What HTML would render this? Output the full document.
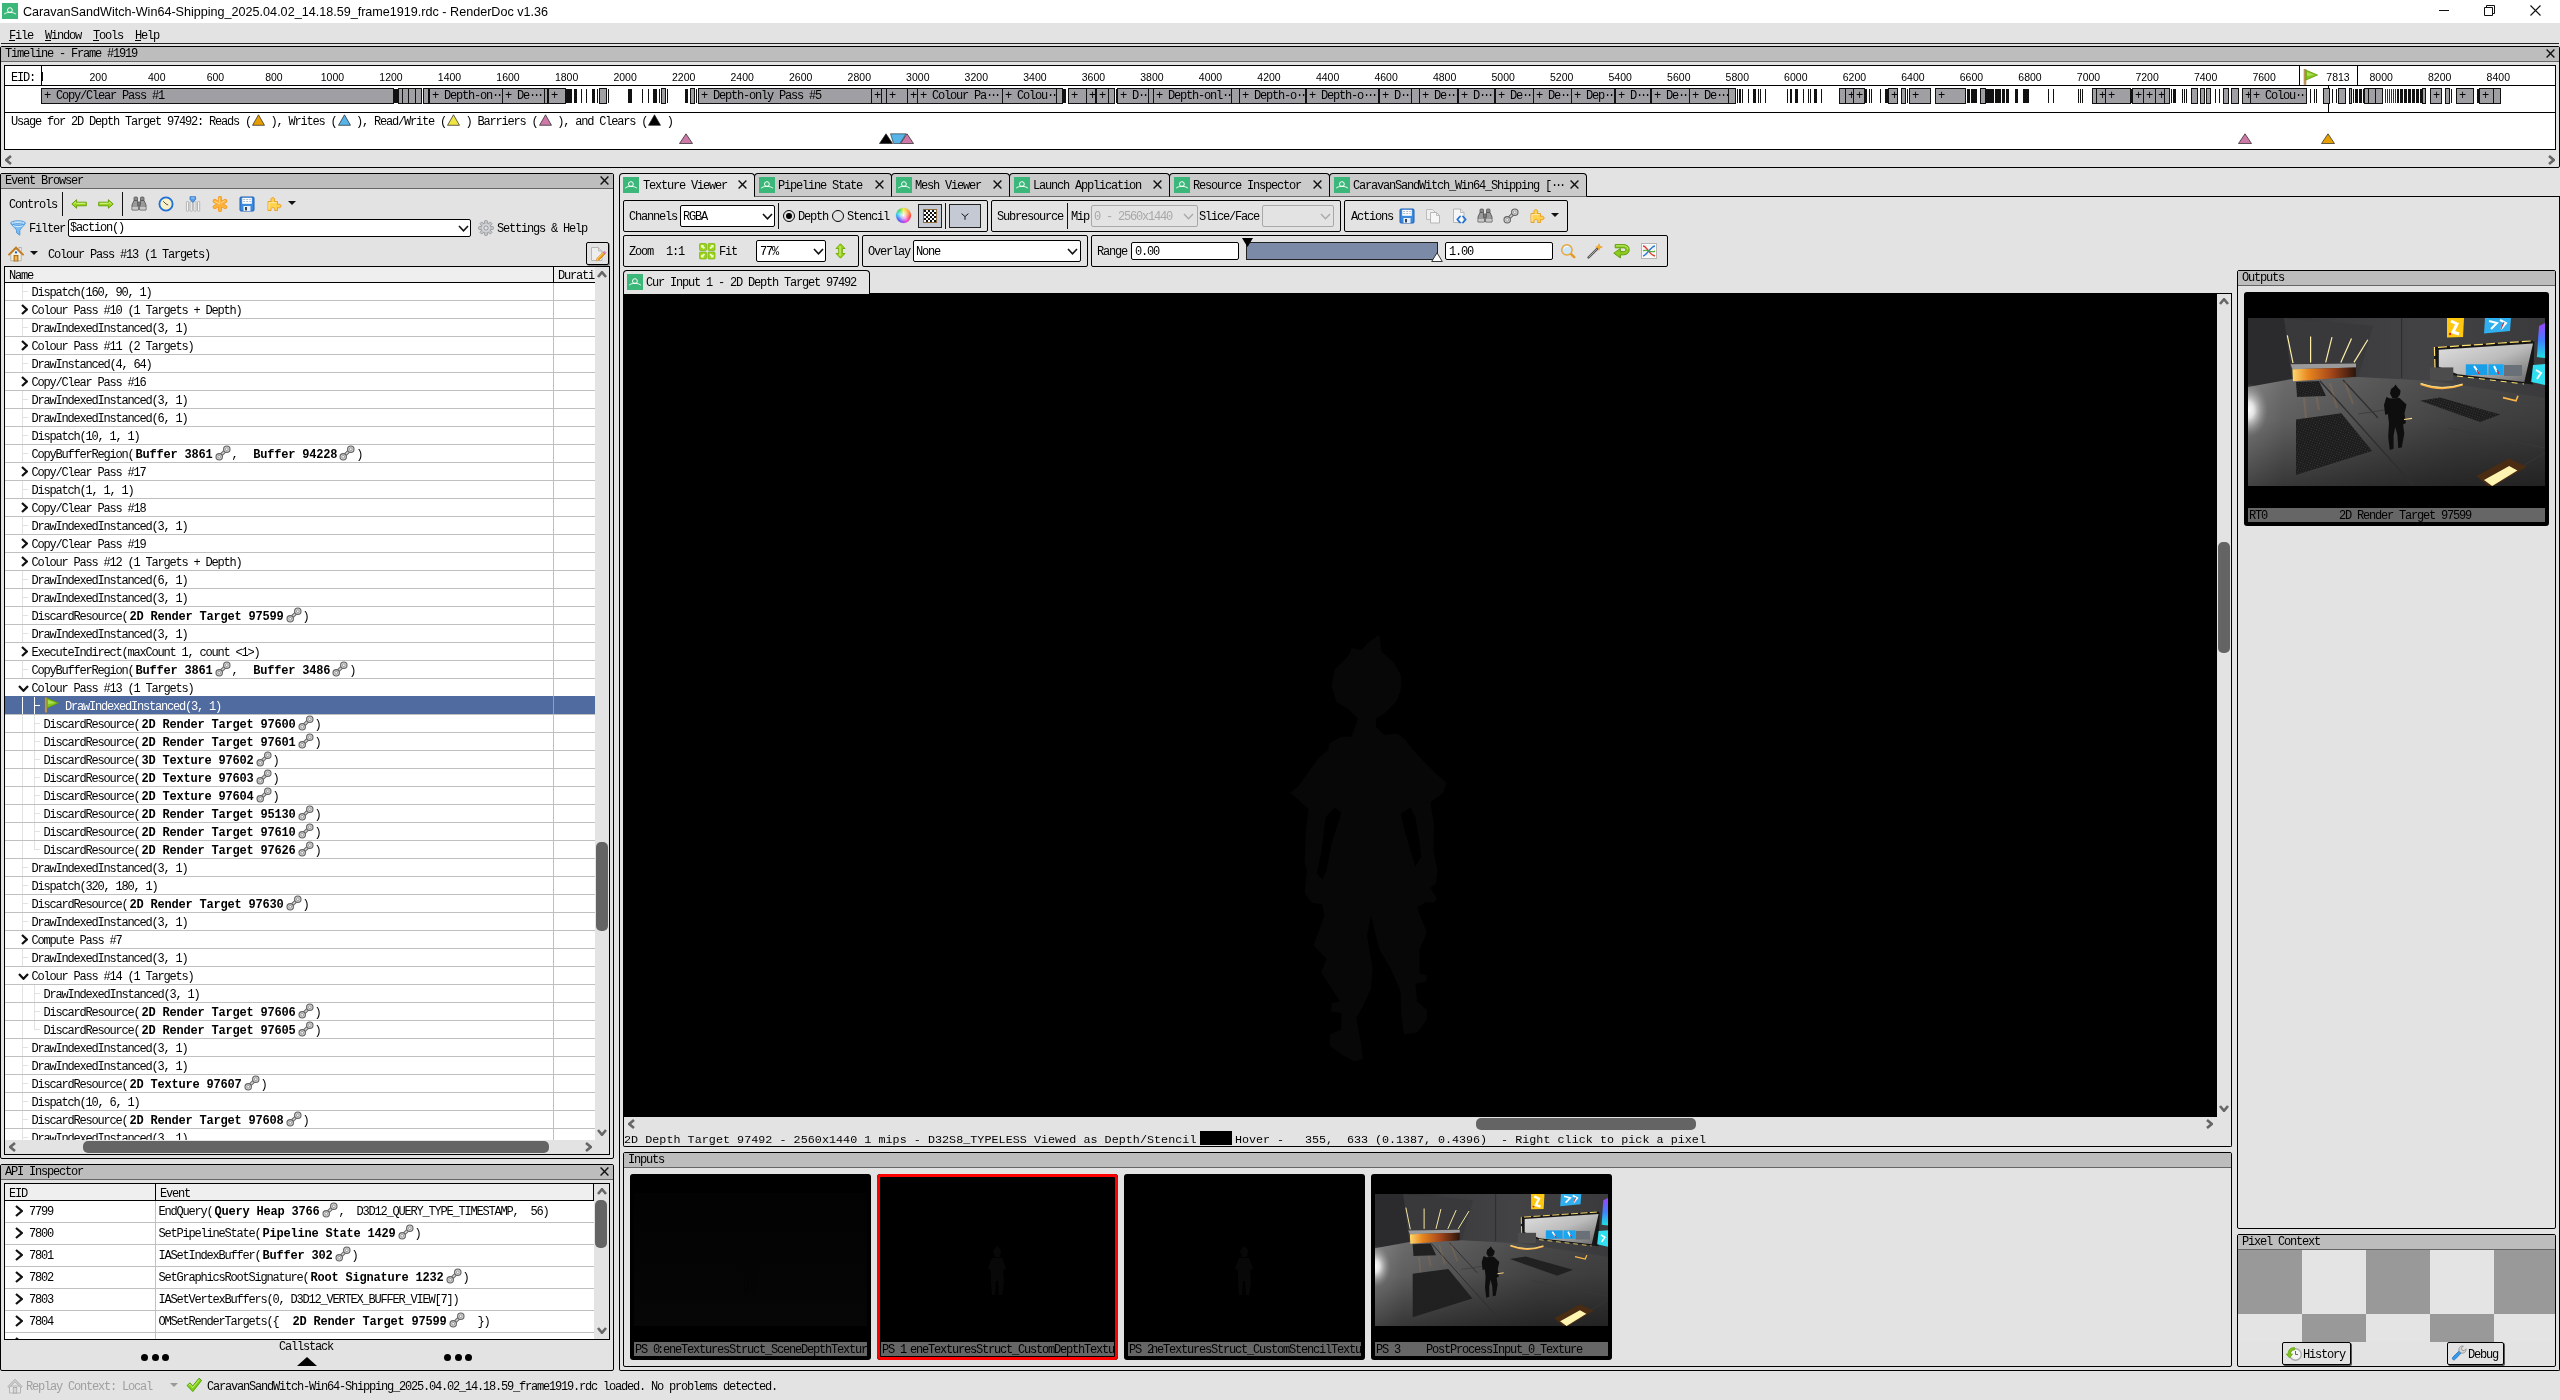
<!DOCTYPE html>
<html lang="en"><head><meta charset="utf-8"><title>RenderDoc</title><style>
html,body{margin:0;padding:0}
body{will-change:transform;width:2560px;height:1400px;overflow:hidden;background:#e3e3e3;position:relative;font-family:"Liberation Mono",monospace}
.b{position:absolute;box-sizing:border-box}
.t{position:absolute;font:12px/14px "Liberation Mono",monospace;letter-spacing:-1.2px;white-space:pre;color:#000}
.t b,.r b{letter-spacing:-0.2px}
.num{font:10.5px/14px "Liberation Sans",sans-serif;text-align:center;color:#000}
.pb{top:88px;height:16px;background:#a0a0a4;border:1px solid #111;overflow:hidden}
.pb .t{top:0}
u{text-decoration:underline}

.r{position:absolute;font:12px/14px "Liberation Mono",monospace;letter-spacing:-1.2px;white-space:pre;color:#000;display:flex;align-items:flex-start}
.r b{margin-left:2px}
.r i{display:block;width:16px;height:16px;margin:-3px 1px 0 2px;flex:none}
.sel{color:#fff}

.grp{position:absolute;box-sizing:border-box;border:1px solid #000;border-radius:2px;height:32px}
.cb{position:absolute;box-sizing:border-box;border:1px solid #000;border-radius:2px;background:#fff}
.cbd{position:absolute;box-sizing:border-box;border:1px solid #a8a8a8;border-radius:2px;background:#e3e3e3}
.m{position:absolute;font:11.72px/14px "Liberation Mono",monospace;white-space:pre;color:#000}
.tab{position:absolute;box-sizing:border-box;border:1px solid #000;border-bottom:none;border-radius:4px 4px 0 0;background:#cbcbcb}

.th{position:absolute;box-sizing:border-box;background:#000;border-radius:3px}
.lb{position:absolute;box-sizing:border-box;background:#666;height:14px;overflow:hidden}
.lb .t{top:1px}
</style></head><body>
<div class="b" style="left:0px;top:0px;width:2560px;height:23px;background:#fff"></div>
<div class="b" style="left:2px;top:3px"><svg width="16" height="16" viewBox="0 0 16 16" style="display:block;"><rect width="16" height="16" fill="#3bb779"/><circle cx="7.9" cy="7.1" r="2.4" fill="none" stroke="#fff" stroke-width="1"/><path d="M2.4 10.9 Q4 9.7 5.8 9.5 Q7.9 8.9 10 9.5 Q11.8 9.7 13.6 10.9" fill="none" stroke="#fff" stroke-width=".9" stroke-linecap="round"/></svg></div>
<div class="b" style="left:23px;top:5.4px;font:12.6px/14px 'Liberation Sans',sans-serif;color:#000;white-space:pre">CaravanSandWitch-Win64-Shipping_2025.04.02_14.18.59_frame1919.rdc - RenderDoc v1.36</div>
<div class="b" style="left:2439px;top:10px;width:10px;height:1px;background:#111"></div>
<div class="b" style="left:2484px;top:5px"><svg width="11" height="11" viewBox="0 0 11 11" style="display:block;"><path d="M0.5 2.5 H8.5 V10.5 H0.5 Z M2.5 2.5 V0.5 H10.5 V8.5 H8.5" fill="none" stroke="#111" stroke-width="1"/></svg></div>
<div class="b" style="left:2530px;top:5px"><svg width="11" height="11" viewBox="0 0 11 11" style="display:block;"><path d="M0.5 0.5 L10.5 10.5 M10.5 0.5 L0.5 10.5" stroke="#111" stroke-width="1.1" fill="none"/></svg></div>
<div class="t" style="left:9px;top:29px;"><u>F</u>ile</div>
<div class="t" style="left:45px;top:29px;"><u>W</u>indow</div>
<div class="t" style="left:93px;top:29px;"><u>T</u>ools</div>
<div class="t" style="left:135px;top:29px;"><u>H</u>elp</div>
<div class="b" style="left:1px;top:43px;width:2558px;height:1px;background:#222"></div>
<div class="b" style="left:0px;top:46px;width:2560px;height:122px;border:1px solid #000;border-radius:2px;box-sizing:border-box"></div>
<div class="b" style="left:1px;top:47px;width:2558px;height:15px;background:#bdbdbd;border-bottom:1px solid #666"></div>
<div class="t" style="left:5px;top:47px;">Timeline - Frame #1919</div>
<div class="b" style="left:2546px;top:49px"><svg width="9" height="9" viewBox="0 0 9 9" style="display:block;"><path d="M0.6 0.6 L8.4 8.4 M8.4 0.6 L0.6 8.4" stroke="#111" stroke-width="1.4" fill="none"/></svg></div>
<div class="b" style="left:4px;top:65px;width:2552px;height:85px;background:#fff;border:1px solid #000;box-sizing:border-box"></div>
<div class="b" style="left:5px;top:85px;width:2550px;height:1px;background:#000"></div>
<div class="b" style="left:5px;top:112px;width:2550px;height:1px;background:#000"></div>
<div class="b" style="left:41px;top:66px;width:1px;height:19px;background:#000"></div>
<div class="t" style="left:11px;top:71px;">EID:</div>
<div class="b num" style="left:78.3px;top:70px;width:40px">200</div>
<div class="b num" style="left:136.8px;top:70px;width:40px">400</div>
<div class="b num" style="left:195.4px;top:70px;width:40px">600</div>
<div class="b num" style="left:253.9px;top:70px;width:40px">800</div>
<div class="b num" style="left:312.4px;top:70px;width:40px">1000</div>
<div class="b num" style="left:371.0px;top:70px;width:40px">1200</div>
<div class="b num" style="left:429.5px;top:70px;width:40px">1400</div>
<div class="b num" style="left:488.0px;top:70px;width:40px">1600</div>
<div class="b num" style="left:546.6px;top:70px;width:40px">1800</div>
<div class="b num" style="left:605.1px;top:70px;width:40px">2000</div>
<div class="b num" style="left:663.7px;top:70px;width:40px">2200</div>
<div class="b num" style="left:722.2px;top:70px;width:40px">2400</div>
<div class="b num" style="left:780.7px;top:70px;width:40px">2600</div>
<div class="b num" style="left:839.3px;top:70px;width:40px">2800</div>
<div class="b num" style="left:897.8px;top:70px;width:40px">3000</div>
<div class="b num" style="left:956.3px;top:70px;width:40px">3200</div>
<div class="b num" style="left:1014.9px;top:70px;width:40px">3400</div>
<div class="b num" style="left:1073.4px;top:70px;width:40px">3600</div>
<div class="b num" style="left:1131.9px;top:70px;width:40px">3800</div>
<div class="b num" style="left:1190.5px;top:70px;width:40px">4000</div>
<div class="b num" style="left:1249.0px;top:70px;width:40px">4200</div>
<div class="b num" style="left:1307.6px;top:70px;width:40px">4400</div>
<div class="b num" style="left:1366.1px;top:70px;width:40px">4600</div>
<div class="b num" style="left:1424.6px;top:70px;width:40px">4800</div>
<div class="b num" style="left:1483.2px;top:70px;width:40px">5000</div>
<div class="b num" style="left:1541.7px;top:70px;width:40px">5200</div>
<div class="b num" style="left:1600.2px;top:70px;width:40px">5400</div>
<div class="b num" style="left:1658.8px;top:70px;width:40px">5600</div>
<div class="b num" style="left:1717.3px;top:70px;width:40px">5800</div>
<div class="b num" style="left:1775.8px;top:70px;width:40px">6000</div>
<div class="b num" style="left:1834.4px;top:70px;width:40px">6200</div>
<div class="b num" style="left:1892.9px;top:70px;width:40px">6400</div>
<div class="b num" style="left:1951.4px;top:70px;width:40px">6600</div>
<div class="b num" style="left:2010.0px;top:70px;width:40px">6800</div>
<div class="b num" style="left:2068.5px;top:70px;width:40px">7000</div>
<div class="b num" style="left:2127.1px;top:70px;width:40px">7200</div>
<div class="b num" style="left:2185.6px;top:70px;width:40px">7400</div>
<div class="b num" style="left:2244.1px;top:70px;width:40px">7600</div>
<div class="b num" style="left:2361.2px;top:70px;width:40px">8000</div>
<div class="b num" style="left:2419.7px;top:70px;width:40px">8200</div>
<div class="b num" style="left:2478.3px;top:70px;width:40px">8400</div>
<div class="b" style="left:42px;top:72px;width:1px;height:9px;background:#111"></div>
<div class="b" style="left:2299px;top:65px;width:59px;height:21px;border:1px solid #000;box-sizing:border-box;background:#fff"></div>
<div class="b" style="left:2303px;top:69px"><svg width="16" height="16" viewBox="0 0 16 16" style="display:block;"><rect x="1" y="0.5" width="2" height="15" fill="#c9a063" stroke="#9a7438" stroke-width=".5"/><path d="M3 1.2 L14.5 6 L3 11 Z" fill="#86c41e" stroke="#5f9a0a" stroke-width=".8" stroke-linejoin="round"/><path d="M4 3 L11.5 6 L4 7" fill="#b8e860" opacity=".75"/></svg></div>
<div class="b num" style="left:2318px;top:70px;width:40px">7813</div>
<div class="b" style="left:2328px;top:86px;width:1px;height:26px;background:#000"></div>
<div class="b pb" style="left:41px;width:353px"><span class="t" style="left:2px;">+ Copy/Clear Pass #1</span></div>
<div class="b" style="left:394px;top:89px;width:4px;height:14px;background:#111"></div>
<div class="b pb" style="left:398px;width:5px"></div>
<div class="b pb" style="left:402px;width:7px"></div>
<div class="b pb" style="left:408px;width:8px"></div>
<div class="b pb" style="left:415px;width:7px"></div>
<div class="b pb" style="left:423px;width:6px"></div>
<div class="b pb" style="left:429px;width:74px"><span class="t" style="left:2px;">+ Depth-on<span style="letter-spacing:-3.2px">···</span></span></div>
<div class="b pb" style="left:502px;width:43px"><span class="t" style="left:2px;">+ De<span style="letter-spacing:-3.2px">···</span></span></div>
<div class="b pb" style="left:544px;width:4px"></div>
<div class="b pb" style="left:548px;width:18px"><span class="t" style="left:2px;">+</span></div>
<div class="b" style="left:566px;top:89px;width:6px;height:14px;background:#111"></div>
<div class="b" style="left:574px;top:89px;width:3px;height:14px;background:#111"></div>
<div class="b" style="left:581px;top:89px;width:1px;height:14px;background:#111"></div>
<div class="b" style="left:586px;top:89px;width:1px;height:14px;background:#111"></div>
<div class="b" style="left:592px;top:89px;width:3px;height:14px;background:#111"></div>
<div class="b" style="left:597px;top:89px;width:1px;height:14px;background:#111"></div>
<div class="b pb" style="left:599px;width:8px"></div>
<div class="b" style="left:608px;top:89px;width:1px;height:14px;background:#111"></div>
<div class="b" style="left:628px;top:89px;width:4px;height:14px;background:#111"></div>
<div class="b" style="left:642px;top:89px;width:1px;height:14px;background:#111"></div>
<div class="b" style="left:648px;top:89px;width:1px;height:14px;background:#111"></div>
<div class="b" style="left:653px;top:89px;width:4px;height:14px;background:#111"></div>
<div class="b" style="left:659px;top:89px;width:1px;height:14px;background:#111"></div>
<div class="b pb" style="left:661px;width:5px"></div>
<div class="b" style="left:667px;top:89px;width:1px;height:14px;background:#111"></div>
<div class="b" style="left:685px;top:89px;width:3px;height:14px;background:#111"></div>
<div class="b pb" style="left:690px;width:5px"></div>
<div class="b" style="left:696px;top:89px;width:1px;height:14px;background:#111"></div>
<div class="b pb" style="left:698px;width:174px"><span class="t" style="left:2px;">+ Depth-only Pass #5</span></div>
<div class="b pb" style="left:871px;width:11px"><span class="t" style="left:2px;">+</span></div>
<div class="b pb" style="left:881px;width:6px"></div>
<div class="b pb" style="left:886px;width:22px"><span class="t" style="left:2px;">+</span></div>
<div class="b pb" style="left:907px;width:11px"><span class="t" style="left:2px;">+</span></div>
<div class="b pb" style="left:917px;width:86px"><span class="t" style="left:2px;">+ Colour Pa<span style="letter-spacing:-3.2px">···</span></span></div>
<div class="b pb" style="left:1002px;width:55px"><span class="t" style="left:2px;">+ Colou<span style="letter-spacing:-3.2px">···</span></span></div>
<div class="b pb" style="left:1056px;width:7px"></div>
<div class="b" style="left:1063px;top:89px;width:3px;height:14px;background:#111"></div>
<div class="b pb" style="left:1068px;width:19px"><span class="t" style="left:2px;">+</span></div>
<div class="b pb" style="left:1086px;width:10px"><span class="t" style="left:2px;">+</span></div>
<div class="b pb" style="left:1096px;width:13px"><span class="t" style="left:2px;">+</span></div>
<div class="b pb" style="left:1108px;width:7px"></div>
<div class="b" style="left:1116px;top:89px;width:1px;height:14px;background:#111"></div>
<div class="b pb" style="left:1117px;width:32px"><span class="t" style="left:2px;">+ D<span style="letter-spacing:-3.2px">···</span></span></div>
<div class="b pb" style="left:1148px;width:6px"></div>
<div class="b pb" style="left:1153px;width:79px"><span class="t" style="left:2px;">+ Depth-onl<span style="letter-spacing:-3.2px">···</span></span></div>
<div class="b pb" style="left:1231px;width:9px"></div>
<div class="b pb" style="left:1239px;width:67px"><span class="t" style="left:2px;">+ Depth-o<span style="letter-spacing:-3.2px">···</span></span></div>
<div class="b pb" style="left:1306px;width:73px"><span class="t" style="left:2px;">+ Depth-o<span style="letter-spacing:-3.2px">···</span></span></div>
<div class="b pb" style="left:1379px;width:33px"><span class="t" style="left:2px;">+ D<span style="letter-spacing:-3.2px">···</span></span></div>
<div class="b pb" style="left:1411px;width:9px"></div>
<div class="b pb" style="left:1419px;width:39px"><span class="t" style="left:2px;">+ De<span style="letter-spacing:-3.2px">···</span></span></div>
<div class="b pb" style="left:1458px;width:37px"><span class="t" style="left:2px;">+ D<span style="letter-spacing:-3.2px">···</span></span></div>
<div class="b pb" style="left:1495px;width:39px"><span class="t" style="left:2px;">+ De<span style="letter-spacing:-3.2px">···</span></span></div>
<div class="b pb" style="left:1533px;width:39px"><span class="t" style="left:2px;">+ De<span style="letter-spacing:-3.2px">···</span></span></div>
<div class="b pb" style="left:1571px;width:44px"><span class="t" style="left:2px;">+ Dep<span style="letter-spacing:-3.2px">···</span></span></div>
<div class="b pb" style="left:1615px;width:36px"><span class="t" style="left:2px;">+ D<span style="letter-spacing:-3.2px">···</span></span></div>
<div class="b pb" style="left:1651px;width:39px"><span class="t" style="left:2px;">+ De<span style="letter-spacing:-3.2px">···</span></span></div>
<div class="b pb" style="left:1689px;width:40px"><span class="t" style="left:2px;">+ De<span style="letter-spacing:-3.2px">···</span></span></div>
<div class="b pb" style="left:1728px;width:8px"></div>
<div class="b" style="left:1737px;top:89px;width:1px;height:14px;background:#111"></div>
<div class="b" style="left:1739px;top:89px;width:2px;height:14px;background:#111"></div>
<div class="b" style="left:1742px;top:89px;width:1px;height:14px;background:#111"></div>
<div class="b" style="left:1748px;top:89px;width:1px;height:14px;background:#111"></div>
<div class="b" style="left:1753px;top:89px;width:3px;height:14px;background:#111"></div>
<div class="b" style="left:1758px;top:89px;width:1px;height:14px;background:#111"></div>
<div class="b" style="left:1760px;top:89px;width:1px;height:14px;background:#111"></div>
<div class="b" style="left:1765px;top:89px;width:1px;height:14px;background:#111"></div>
<div class="b" style="left:1787px;top:89px;width:1px;height:14px;background:#111"></div>
<div class="b" style="left:1790px;top:89px;width:2px;height:14px;background:#111"></div>
<div class="b" style="left:1795px;top:89px;width:3px;height:14px;background:#111"></div>
<div class="b" style="left:1803px;top:89px;width:1px;height:14px;background:#111"></div>
<div class="b" style="left:1808px;top:89px;width:1px;height:14px;background:#111"></div>
<div class="b" style="left:1810px;top:89px;width:1px;height:14px;background:#111"></div>
<div class="b" style="left:1814px;top:89px;width:3px;height:14px;background:#111"></div>
<div class="b" style="left:1821px;top:89px;width:1px;height:14px;background:#111"></div>
<div class="b pb" style="left:1839px;width:7px"></div>
<div class="b pb" style="left:1845px;width:9px"><span class="t" style="left:2px;">+</span></div>
<div class="b pb" style="left:1853px;width:12px"><span class="t" style="left:2px;">+</span></div>
<div class="b" style="left:1865px;top:89px;width:2px;height:14px;background:#111"></div>
<div class="b" style="left:1869px;top:89px;width:1px;height:14px;background:#111"></div>
<div class="b" style="left:1871px;top:89px;width:1px;height:14px;background:#111"></div>
<div class="b" style="left:1880px;top:89px;width:1px;height:14px;background:#111"></div>
<div class="b" style="left:1885px;top:89px;width:3px;height:14px;background:#111"></div>
<div class="b pb" style="left:1888px;width:10px"><span class="t" style="left:2px;">+</span></div>
<div class="b pb" style="left:1901px;width:5px"></div>
<div class="b" style="left:1907px;top:89px;width:1px;height:14px;background:#111"></div>
<div class="b pb" style="left:1909px;width:22px"><span class="t" style="left:2px;">+</span></div>
<div class="b pb" style="left:1935px;width:31px"><span class="t" style="left:2px;">+</span></div>
<div class="b" style="left:1967px;top:89px;width:3px;height:14px;background:#111"></div>
<div class="b" style="left:1971px;top:89px;width:6px;height:14px;background:#111"></div>
<div class="b pb" style="left:1980px;width:6px"></div>
<div class="b" style="left:1986px;top:89px;width:8px;height:14px;background:#111"></div>
<div class="b" style="left:1995px;top:89px;width:6px;height:14px;background:#111"></div>
<div class="b" style="left:2002px;top:89px;width:3px;height:14px;background:#111"></div>
<div class="b" style="left:2006px;top:89px;width:3px;height:14px;background:#111"></div>
<div class="b" style="left:2015px;top:89px;width:3px;height:14px;background:#111"></div>
<div class="b" style="left:2023px;top:89px;width:6px;height:14px;background:#111"></div>
<div class="b" style="left:2048px;top:89px;width:1px;height:14px;background:#111"></div>
<div class="b" style="left:2053px;top:89px;width:1px;height:14px;background:#111"></div>
<div class="b" style="left:2078px;top:89px;width:1px;height:14px;background:#111"></div>
<div class="b" style="left:2080px;top:89px;width:1px;height:14px;background:#111"></div>
<div class="b" style="left:2082px;top:89px;width:1px;height:14px;background:#111"></div>
<div class="b pb" style="left:2092px;width:5px"></div>
<div class="b pb" style="left:2096px;width:10px"><span class="t" style="left:2px;">+</span></div>
<div class="b pb" style="left:2105px;width:26px"><span class="t" style="left:2px;">+</span></div>
<div class="b" style="left:2130px;top:89px;width:2px;height:14px;background:#111"></div>
<div class="b pb" style="left:2132px;width:12px"><span class="t" style="left:2px;">+</span></div>
<div class="b pb" style="left:2143px;width:13px"><span class="t" style="left:2px;">+</span></div>
<div class="b pb" style="left:2155px;width:10px"><span class="t" style="left:2px;">+</span></div>
<div class="b pb" style="left:2164px;width:6px"></div>
<div class="b" style="left:2171px;top:89px;width:1px;height:14px;background:#111"></div>
<div class="b" style="left:2173px;top:89px;width:3px;height:14px;background:#111"></div>
<div class="b" style="left:2182px;top:89px;width:1px;height:14px;background:#111"></div>
<div class="b" style="left:2184px;top:89px;width:1px;height:14px;background:#111"></div>
<div class="b" style="left:2186px;top:89px;width:1px;height:14px;background:#111"></div>
<div class="b pb" style="left:2191px;width:7px"></div>
<div class="b pb" style="left:2200px;width:5px"></div>
<div class="b pb" style="left:2206px;width:5px"></div>
<div class="b" style="left:2215px;top:89px;width:1px;height:14px;background:#111"></div>
<div class="b" style="left:2219px;top:89px;width:1px;height:14px;background:#111"></div>
<div class="b pb" style="left:2223px;width:6px"></div>
<div class="b pb" style="left:2231px;width:8px"></div>
<div class="b pb" style="left:2242px;width:9px"><span class="t" style="left:2px;">+</span></div>
<div class="b pb" style="left:2250px;width:57px"><span class="t" style="left:2px;">+ Colou<span style="letter-spacing:-3.2px">···</span></span></div>
<div class="b" style="left:2310px;top:89px;width:1px;height:14px;background:#111"></div>
<div class="b" style="left:2314px;top:89px;width:1px;height:14px;background:#111"></div>
<div class="b" style="left:2316px;top:89px;width:1px;height:14px;background:#111"></div>
<div class="b pb" style="left:2323px;width:7px"></div>
<div class="b" style="left:2332px;top:89px;width:1px;height:14px;background:#111"></div>
<div class="b" style="left:2336px;top:89px;width:1px;height:14px;background:#111"></div>
<div class="b pb" style="left:2338px;width:8px"></div>
<div class="b pb" style="left:2349px;width:3px"></div>
<div class="b" style="left:2353px;top:89px;width:1px;height:14px;background:#111"></div>
<div class="b" style="left:2355px;top:89px;width:1px;height:14px;background:#111"></div>
<div class="b" style="left:2357px;top:89px;width:1px;height:14px;background:#111"></div>
<div class="b" style="left:2359px;top:89px;width:1px;height:14px;background:#111"></div>
<div class="b" style="left:2361px;top:89px;width:1px;height:14px;background:#111"></div>
<div class="b" style="left:2363px;top:89px;width:1px;height:14px;background:#111"></div>
<div class="b" style="left:2355px;top:89px;width:3px;height:14px;background:#111"></div>
<div class="b" style="left:2360px;top:89px;width:2px;height:14px;background:#111"></div>
<div class="b pb" style="left:2364px;width:5px"></div>
<div class="b pb" style="left:2368px;width:8px"></div>
<div class="b pb" style="left:2375px;width:8px"></div>
<div class="b" style="left:2385px;top:89px;width:1px;height:14px;background:#333"></div>
<div class="b" style="left:2387px;top:89px;width:1px;height:14px;background:#333"></div>
<div class="b" style="left:2389px;top:89px;width:1px;height:14px;background:#333"></div>
<div class="b" style="left:2391px;top:89px;width:1px;height:14px;background:#333"></div>
<div class="b" style="left:2393px;top:89px;width:1px;height:14px;background:#333"></div>
<div class="b" style="left:2395px;top:89px;width:1px;height:14px;background:#333"></div>
<div class="b" style="left:2397px;top:89px;width:1px;height:14px;background:#111"></div>
<div class="b" style="left:2398px;top:89px;width:1px;height:14px;background:#111"></div>
<div class="b" style="left:2400px;top:89px;width:1px;height:14px;background:#111"></div>
<div class="b" style="left:2401px;top:89px;width:1px;height:14px;background:#111"></div>
<div class="b" style="left:2402px;top:89px;width:1px;height:14px;background:#111"></div>
<div class="b" style="left:2404px;top:89px;width:1px;height:14px;background:#111"></div>
<div class="b" style="left:2405px;top:89px;width:1px;height:14px;background:#111"></div>
<div class="b" style="left:2406px;top:89px;width:1px;height:14px;background:#111"></div>
<div class="b" style="left:2408px;top:89px;width:1px;height:14px;background:#111"></div>
<div class="b" style="left:2409px;top:89px;width:1px;height:14px;background:#111"></div>
<div class="b" style="left:2410px;top:89px;width:1px;height:14px;background:#111"></div>
<div class="b" style="left:2412px;top:89px;width:1px;height:14px;background:#111"></div>
<div class="b" style="left:2413px;top:89px;width:1px;height:14px;background:#111"></div>
<div class="b" style="left:2414px;top:89px;width:1px;height:14px;background:#111"></div>
<div class="b" style="left:2416px;top:89px;width:1px;height:14px;background:#111"></div>
<div class="b" style="left:2417px;top:89px;width:1px;height:14px;background:#111"></div>
<div class="b" style="left:2418px;top:89px;width:1px;height:14px;background:#111"></div>
<div class="b" style="left:2420px;top:89px;width:1px;height:14px;background:#111"></div>
<div class="b" style="left:2421px;top:89px;width:1px;height:14px;background:#111"></div>
<div class="b pb" style="left:2422px;width:4px"></div>
<div class="b pb" style="left:2430px;width:12px"><span class="t" style="left:2px;">+</span></div>
<div class="b pb" style="left:2445px;width:5px"></div>
<div class="b" style="left:2451px;top:89px;width:1px;height:14px;background:#111"></div>
<div class="b pb" style="left:2456px;width:18px"><span class="t" style="left:2px;">+</span></div>
<div class="b" style="left:2477px;top:89px;width:2px;height:14px;background:#111"></div>
<div class="b pb" style="left:2479px;width:15px"><span class="t" style="left:2px;">+</span></div>
<div class="b pb" style="left:2493px;width:8px"></div>
<div class="t" style="left:11px;top:115px;">Usage for 2D Depth Target 97492: Reads (<span style="display:inline-block;width:19.5px;height:10px;position:relative;vertical-align:top"><span style="position:absolute;left:1.3px;top:-0.8px"><svg width="13" height="12" viewBox="0 0 13 12" style="display:block;"><path d="M0.5 11.3 L6.5 0.8 L12.5 11.3 Z" fill="#e69f00" stroke="#222" stroke-width=".7"/></svg></span></span>), Writes (<span style="display:inline-block;width:19.5px;height:10px;position:relative;vertical-align:top"><span style="position:absolute;left:1.3px;top:-0.8px"><svg width="13" height="12" viewBox="0 0 13 12" style="display:block;"><path d="M0.5 11.3 L6.5 0.8 L12.5 11.3 Z" fill="#56b4e9" stroke="#222" stroke-width=".7"/></svg></span></span>), Read/Write (<span style="display:inline-block;width:19.5px;height:10px;position:relative;vertical-align:top"><span style="position:absolute;left:1.3px;top:-0.8px"><svg width="13" height="12" viewBox="0 0 13 12" style="display:block;"><path d="M0.5 11.3 L6.5 0.8 L12.5 11.3 Z" fill="#f0e442" stroke="#222" stroke-width=".7"/></svg></span></span>) Barriers (<span style="display:inline-block;width:19.5px;height:10px;position:relative;vertical-align:top"><span style="position:absolute;left:1.3px;top:-0.8px"><svg width="13" height="12" viewBox="0 0 13 12" style="display:block;"><path d="M0.5 11.3 L6.5 0.8 L12.5 11.3 Z" fill="#cc79a7" stroke="#222" stroke-width=".7"/></svg></span></span>), and Clears (<span style="display:inline-block;width:19.5px;height:10px;position:relative;vertical-align:top"><span style="position:absolute;left:1.3px;top:-0.8px"><svg width="13" height="12" viewBox="0 0 13 12" style="display:block;"><path d="M0.5 11.3 L6.5 0.8 L12.5 11.3 Z" fill="#000" stroke="#222" stroke-width=".7"/></svg></span></span>)</div>
<div class="b" style="left:679.0px;top:133px"><svg width="14" height="11" viewBox="0 0 14 11" style="display:block;"><path d="M0.5 10.5 L7.0 0.8 L13.5 10.5 Z" fill="#cc79a7" stroke="#222" stroke-width=".7"/></svg></div>
<div class="b" style="left:879.0px;top:133px"><svg width="14" height="11" viewBox="0 0 14 11" style="display:block;"><path d="M0.5 10.5 L7.0 0.8 L13.5 10.5 Z" fill="#000" stroke="#222" stroke-width=".7"/></svg></div>
<div class="b" style="left:889px;top:133px"><svg width="18" height="11" viewBox="0 0 18 11" style="display:block;"><path d="M1.5 0.8 L17 0.8 L11 10.5 L4.5 10.5 Z" fill="#56b4e9" stroke="#222" stroke-width=".6"/></svg></div>
<div class="b" style="left:899.5px;top:133px"><svg width="14" height="11" viewBox="0 0 14 11" style="display:block;"><path d="M0.5 10.5 L7.0 0.8 L13.5 10.5 Z" fill="#cc79a7" stroke="#222" stroke-width=".7"/></svg></div>
<div class="b" style="left:2238.0px;top:133px"><svg width="14" height="11" viewBox="0 0 14 11" style="display:block;"><path d="M0.5 10.5 L7.0 0.8 L13.5 10.5 Z" fill="#cc79a7" stroke="#222" stroke-width=".7"/></svg></div>
<div class="b" style="left:2321.0px;top:133px"><svg width="14" height="11" viewBox="0 0 14 11" style="display:block;"><path d="M0.5 10.5 L7.0 0.8 L13.5 10.5 Z" fill="#e69f00" stroke="#222" stroke-width=".7"/></svg></div>
<div class="b" style="left:5px;top:155px"><svg width="7" height="10" viewBox="0 0 7 10" style="display:block;"><path d="M6 1 L1.2 5.0 L6 9" fill="none" stroke="#666" stroke-width="2.6" stroke-linecap="butt" stroke-linejoin="miter"/></svg></div>
<div class="b" style="left:2548px;top:155px"><svg width="7" height="10" viewBox="0 0 7 10" style="display:block;"><path d="M1 1 L5.8 5.0 L1 9" fill="none" stroke="#666" stroke-width="2.6" stroke-linecap="butt" stroke-linejoin="miter"/></svg></div>
<div class="b" style="left:0px;top:173px;width:614px;height:986px;border:1px solid #000;border-radius:2px;box-sizing:border-box"></div>
<div class="b" style="left:1px;top:174px;width:612px;height:15px;background:#bdbdbd;border-bottom:1px solid #666"></div>
<div class="t" style="left:5px;top:174px;">Event Browser</div>
<div class="b" style="left:600px;top:176px"><svg width="9" height="9" viewBox="0 0 9 9" style="display:block;"><path d="M0.6 0.6 L8.4 8.4 M8.4 0.6 L0.6 8.4" stroke="#111" stroke-width="1.4" fill="none"/></svg></div>
<div class="t" style="left:9px;top:198px;">Controls</div>
<div class="b" style="left:62px;top:192px;width:1px;height:24px;background:#111"></div>
<div class="b" style="left:122px;top:192px;width:1px;height:24px;background:#111"></div>
<div class="b" style="left:71px;top:196px"><svg width="16" height="16" viewBox="0 0 16 16" style="display:block;"><path d="M0.8 8 L5.6 3.7 L5.6 6.2 L15.3 6.2 L15.3 9.8 L5.6 9.8 L5.6 12.3 Z" fill="#9ad41a" stroke="#5f9a00" stroke-width=".9" stroke-linejoin="round"/><path d="M2.6 8 L5 5.9 M5.6 7.3 L14.4 7.3" fill="none" stroke="#d8f58a" stroke-width="1"/></svg></div>
<div class="b" style="left:98px;top:196px"><svg width="16" height="16" viewBox="0 0 16 16" style="display:block;"><g transform="translate(16,0) scale(-1,1)"><path d="M0.8 8 L5.6 3.7 L5.6 6.2 L15.3 6.2 L15.3 9.8 L5.6 9.8 L5.6 12.3 Z" fill="#9ad41a" stroke="#5f9a00" stroke-width=".9" stroke-linejoin="round"/><path d="M2.6 8 L5 5.9 M5.6 7.3 L14.4 7.3" fill="none" stroke="#d8f58a" stroke-width="1"/></g></svg></div>
<div class="b" style="left:131px;top:196px"><svg width="16" height="16" viewBox="0 0 16 16" style="display:block;"><rect x="3" y="1" width="3.5" height="4" rx="1" fill="#8a8a8a" stroke="#555" stroke-width=".8"/><rect x="9.5" y="1" width="3.5" height="4" rx="1" fill="#8a8a8a" stroke="#555" stroke-width=".8"/><path d="M1 14 L1 9 L3 4.5 L6.5 4.5 L7.3 9 L7.3 14 Z" fill="#9a9a9a" stroke="#555" stroke-width=".9"/><path d="M15 14 L15 9 L13 4.5 L9.5 4.5 L8.7 9 L8.7 14 Z" fill="#9a9a9a" stroke="#555" stroke-width=".9"/><rect x="6.5" y="6" width="3" height="3.5" fill="#777" stroke="#555" stroke-width=".6"/><rect x="1.3" y="11" width="5.7" height="2.6" fill="#c8c8c8"/><rect x="9" y="11" width="5.7" height="2.6" fill="#c8c8c8"/></svg></div>
<div class="b" style="left:158px;top:196px"><svg width="16" height="16" viewBox="0 0 16 16" style="display:block;"><circle cx="8" cy="8" r="6.6" fill="#f7f0c8" stroke="#1f6fd8" stroke-width="1.8"/><path d="M8 8 L5.2 5.2 M8 8 L10.2 9" stroke="#555" stroke-width="1" fill="none"/></svg></div>
<div class="b" style="left:185px;top:196px"><svg width="16" height="16" viewBox="0 0 16 16" style="display:block;"><rect x="1.4" y="5.6" width="2.2" height="9.6" rx=".6" fill="#f6f6f6" stroke="#a6a6a6" stroke-width=".8"/><rect x="5.1" y="5.6" width="2.2" height="9.6" rx=".6" fill="#f6f6f6" stroke="#a6a6a6" stroke-width=".8"/><rect x="8.8" y="5.6" width="2.2" height="9.6" rx=".6" fill="#f6f6f6" stroke="#a6a6a6" stroke-width=".8"/><rect x="12.5" y="5.6" width="2.2" height="9.6" rx=".6" fill="#f6f6f6" stroke="#a6a6a6" stroke-width=".8"/><path d="M5 0.7 L10.6 0.7 L10.6 3.4 L7.8 6.4 L5 3.4 Z" fill="#5a9ee8" stroke="#2f72c8" stroke-width=".8" stroke-linejoin="round"/><path d="M6.2 2 H9.4" stroke="#bcd8f6" stroke-width=".8"/></svg></div>
<div class="b" style="left:212px;top:196px"><svg width="16" height="16" viewBox="0 0 16 16" style="display:block;"><g stroke="#f09a1e" stroke-width="4.2" stroke-linecap="round"><path d="M8 2 L8 14"/><path d="M2.8 5 L13.2 11"/><path d="M13.2 5 L2.8 11"/></g><g stroke="#fdb13e" stroke-width="2.8" stroke-linecap="round"><path d="M8 2 L8 14"/><path d="M2.8 5 L13.2 11"/><path d="M13.2 5 L2.8 11"/></g><g stroke="#ffd890" stroke-width="1" stroke-linecap="round"><path d="M7.4 2.4 L7.4 7"/><path d="M3 5.6 L7 7.8"/><path d="M12.6 4.8 L9 7"/></g></svg></div>
<div class="b" style="left:239px;top:196px"><svg width="16" height="16" viewBox="0 0 16 16" style="display:block;"><rect x="1" y="1" width="14" height="14" rx="1" fill="#3a8be0" stroke="#1d5fb4" stroke-width="1"/><rect x="3.2" y="1.8" width="9.6" height="6" fill="#fff"/><path d="M4.2 3.5 H11.8 M4.2 5.5 H11.8" stroke="#9ab" stroke-width=".8" stroke-dasharray="2 1"/><rect x="4.5" y="10" width="7" height="5" fill="#e8eef6"/><rect x="6" y="11" width="2" height="3.4" fill="#345"/></svg></div>
<div class="b" style="left:266px;top:196px"><svg width="16" height="16" viewBox="0 0 16 16" style="display:block;"><path d="M2 5.5 H5.3 C4.2 3.2 5.2 1.6 6.8 1.6 C8.4 1.6 9.4 3.2 8.3 5.5 H11.5 V8.6 C13.6 7.6 15 8.5 15 10 C15 11.6 13.6 12.4 11.5 11.4 V14.5 H8.6 C9.4 12.6 8.4 11.6 6.9 11.6 C5.4 11.6 4.4 12.6 5.2 14.5 H2 Z" fill="#ffd24e" stroke="#e8a02c" stroke-width="1" stroke-linejoin="round"/><path d="M3 6.6 H10.5 M3 6.6 V13.4" stroke="#ffeaa6" stroke-width="1" fill="none"/></svg></div>
<div class="b" style="left:288px;top:201px"><svg width="8" height="4" viewBox="0 0 8 4" style="display:block;"><path d="M0 0 H8 L4.0 4 Z" fill="#111"/></svg></div>
<div class="b" style="left:10px;top:220px"><svg width="16" height="16" viewBox="0 0 16 16" style="display:block;"><path d="M0.8 3 C2 6.4 6.4 8.6 6.6 10.6 L6.6 12.8 L9.8 15.2 L9.8 10.6 C10 8.6 14 6.4 15.2 3 Z" fill="#7dbcf0" stroke="#3f93dc" stroke-width=".9" stroke-linejoin="round"/><path d="M3.2 5.6 C6 7 10 7 12.8 5.6" fill="none" stroke="#d6ecfb" stroke-width="1"/><ellipse cx="8" cy="2.9" rx="7.3" ry="2.1" fill="#cfe6fa" stroke="#3f93dc" stroke-width=".9"/><path d="M3 2.9 C6 3.8 10 3.8 13 2.9" fill="none" stroke="#4a9be0" stroke-width=".8"/></svg></div>
<div class="t" style="left:29px;top:222px;">Filter</div>
<div class="b" style="left:68px;top:219px;width:403px;height:18px;background:#fff;border:1px solid #000;border-radius:2px"></div>
<div class="t" style="left:70px;top:221px;">$action()</div>
<div class="b" style="left:458px;top:225px"><svg width="11" height="7" viewBox="0 0 11 7" style="display:block;"><path d="M1 1 L5.5 5.8 L10 1" fill="none" stroke="#111" stroke-width="1.6" stroke-linecap="butt" stroke-linejoin="miter"/></svg></div>
<div class="b" style="left:478px;top:220px"><svg width="16" height="16" viewBox="0 0 16 16" style="display:block;"><rect x="6.6" y="0.6" width="2.8" height="3.4" rx=".5" fill="#c0c2c6" stroke="#8c8e94" stroke-width=".7" transform="rotate(0 8 8)"/><rect x="6.6" y="0.6" width="2.8" height="3.4" rx=".5" fill="#c0c2c6" stroke="#8c8e94" stroke-width=".7" transform="rotate(45 8 8)"/><rect x="6.6" y="0.6" width="2.8" height="3.4" rx=".5" fill="#c0c2c6" stroke="#8c8e94" stroke-width=".7" transform="rotate(90 8 8)"/><rect x="6.6" y="0.6" width="2.8" height="3.4" rx=".5" fill="#c0c2c6" stroke="#8c8e94" stroke-width=".7" transform="rotate(135 8 8)"/><rect x="6.6" y="0.6" width="2.8" height="3.4" rx=".5" fill="#c0c2c6" stroke="#8c8e94" stroke-width=".7" transform="rotate(180 8 8)"/><rect x="6.6" y="0.6" width="2.8" height="3.4" rx=".5" fill="#c0c2c6" stroke="#8c8e94" stroke-width=".7" transform="rotate(225 8 8)"/><rect x="6.6" y="0.6" width="2.8" height="3.4" rx=".5" fill="#c0c2c6" stroke="#8c8e94" stroke-width=".7" transform="rotate(270 8 8)"/><rect x="6.6" y="0.6" width="2.8" height="3.4" rx=".5" fill="#c0c2c6" stroke="#8c8e94" stroke-width=".7" transform="rotate(315 8 8)"/><circle cx="8" cy="8" r="5.3" fill="#c6c8cc" stroke="#8c8e94" stroke-width=".8"/><rect x="7" y="1.2" width="2" height="2.6" fill="#c3c5c9" transform="rotate(0 8 8)"/><rect x="7" y="1.2" width="2" height="2.6" fill="#c3c5c9" transform="rotate(45 8 8)"/><rect x="7" y="1.2" width="2" height="2.6" fill="#c3c5c9" transform="rotate(90 8 8)"/><rect x="7" y="1.2" width="2" height="2.6" fill="#c3c5c9" transform="rotate(135 8 8)"/><rect x="7" y="1.2" width="2" height="2.6" fill="#c3c5c9" transform="rotate(180 8 8)"/><rect x="7" y="1.2" width="2" height="2.6" fill="#c3c5c9" transform="rotate(225 8 8)"/><rect x="7" y="1.2" width="2" height="2.6" fill="#c3c5c9" transform="rotate(270 8 8)"/><rect x="7" y="1.2" width="2" height="2.6" fill="#c3c5c9" transform="rotate(315 8 8)"/><circle cx="8" cy="8" r="3.4" fill="none" stroke="#dcdde0" stroke-width="1"/><circle cx="8" cy="8" r="2.1" fill="#e3e3e3" stroke="#8c8e94" stroke-width=".8"/></svg></div>
<div class="t" style="left:497px;top:222px;">Settings &amp; Help</div>
<div class="b" style="left:8px;top:246px"><svg width="16" height="16" viewBox="0 0 16 16" style="display:block;"><rect x="11" y="1.6" width="2.2" height="4" fill="#eee" stroke="#999" stroke-width=".6"/><path d="M2.8 8.2 L8 3 L13.2 8.2 V14.8 H2.8 Z" fill="#f2f1e4" stroke="#a9a99a" stroke-width=".8"/><path d="M1 8.6 L8 1.6 L15 8.6" fill="none" stroke="#c47a1e" stroke-width="1.9" stroke-linejoin="miter" stroke-linecap="round"/><rect x="6" y="9.4" width="4" height="5.6" fill="#e39a2c" stroke="#a46410" stroke-width=".8"/><rect x="7.1" y="10.4" width="1.8" height="4.2" fill="#f0b860"/><circle cx="8" cy="6.4" r="1.1" fill="#2255cc"/></svg></div>
<div class="b" style="left:30px;top:251px"><svg width="8" height="4" viewBox="0 0 8 4" style="display:block;"><path d="M0 0 H8 L4.0 4 Z" fill="#111"/></svg></div>
<div class="t" style="left:48px;top:248px;">Colour Pass #13 (1 Targets)</div>
<div class="b" style="left:586px;top:242px;width:23px;height:23px;border:1px solid #000;border-radius:2px;background:#e3e3e3;box-shadow:1px 1px 0 #888"></div>
<div class="b" style="left:590px;top:246px"><svg width="16" height="16" viewBox="0 0 16 16" style="display:block;overflow:visible"><path d="M1.5 1.5 H8.5 L12 5 V14.5 H1.5 Z" fill="#eeeeee" stroke="#b0b0b0" stroke-width=".9"/><path d="M8.5 1.5 V5 H12" fill="#dcdcdc" stroke="#b0b0b0" stroke-width=".8"/><path d="M6.4 14.8 L7 12.4 L13.2 6.2 L15 8 L8.8 14.2 Z" fill="#f5a21a" stroke="#c27a10" stroke-width=".7" stroke-linejoin="round"/><path d="M7.6 12.4 L13.4 6.6" stroke="#ffd27a" stroke-width=".8"/><path d="M13.2 6.2 L14.3 5.1 L16.1 6.9 L15 8 Z" fill="#e57fc0" stroke="#b8609a" stroke-width=".4"/><path d="M6.4 14.8 L7 12.4 L8.8 14.2 Z" fill="#e8d2a4"/></svg></div>
<div class="b" style="left:4px;top:266px;width:606px;height:889px;border:1px solid #000;background:#fff"></div>
<div class="b" style="left:5px;top:267px;width:590px;height:15px;background:#efefef"></div>
<div class="b" style="left:5px;top:282px;width:590px;height:1px;background:#000"></div>
<div class="b" style="left:553px;top:267px;width:1px;height:16px;background:#000"></div>
<div class="t" style="left:9px;top:269px;">Name</div>
<div class="t" style="left:558px;top:269px;">Durati</div>
<div class="b" style="left:595px;top:267px;width:14px;height:873px;background:#e3e3e3"></div>
<div class="b" style="left:597px;top:271px"><svg width="10" height="7" viewBox="0 0 10 7" style="display:block;"><path d="M1 6 L5.0 1.2 L9 6" fill="none" stroke="#666" stroke-width="2.6" stroke-linecap="butt" stroke-linejoin="miter"/></svg></div>
<div class="b" style="left:597px;top:1129px"><svg width="10" height="7" viewBox="0 0 10 7" style="display:block;"><path d="M1 1 L5.0 5.8 L9 1" fill="none" stroke="#666" stroke-width="2.6" stroke-linecap="butt" stroke-linejoin="miter"/></svg></div>
<div class="b" style="left:596px;top:842px;width:12px;height:89px;background:#646464;border-radius:5px"></div>
<div class="b" style="left:5px;top:283px;width:590px;height:857px;overflow:hidden">
<div class="b" style="left:548px;top:0;width:1px;height:857px;background:#c0c0c0"></div>
<div class="b" style="left:0;top:17px;width:590px;height:1px;background:#c0c0c0"></div>
<div class="b" style="left:17px;top:0px;width:1px;height:17px;background:#e2e2e2"></div>
<div class="b" style="left:17px;top:8px;width:6px;height:1px;background:#e2e2e2"></div>
<div class="r" style="left:26.5px;top:3px"><span>Dispatch(160, 90, 1)</span></div>
<div class="b" style="left:0;top:35px;width:590px;height:1px;background:#c0c0c0"></div>
<div class="b" style="left:16px;top:21px"><svg width="7" height="11" viewBox="0 0 7 11" style="display:block;"><path d="M1 1 L5.8 5.5 L1 10" fill="none" stroke="#111" stroke-width="2.2" stroke-linecap="butt" stroke-linejoin="miter"/></svg></div>
<div class="r" style="left:26.5px;top:21px"><span>Colour Pass #10 (1 Targets + Depth)</span></div>
<div class="b" style="left:0;top:53px;width:590px;height:1px;background:#c0c0c0"></div>
<div class="b" style="left:17px;top:36px;width:1px;height:17px;background:#e2e2e2"></div>
<div class="b" style="left:17px;top:44px;width:6px;height:1px;background:#e2e2e2"></div>
<div class="r" style="left:26.5px;top:39px"><span>DrawIndexedInstanced(3, 1)</span></div>
<div class="b" style="left:0;top:71px;width:590px;height:1px;background:#c0c0c0"></div>
<div class="b" style="left:16px;top:57px"><svg width="7" height="11" viewBox="0 0 7 11" style="display:block;"><path d="M1 1 L5.8 5.5 L1 10" fill="none" stroke="#111" stroke-width="2.2" stroke-linecap="butt" stroke-linejoin="miter"/></svg></div>
<div class="r" style="left:26.5px;top:57px"><span>Colour Pass #11 (2 Targets)</span></div>
<div class="b" style="left:0;top:89px;width:590px;height:1px;background:#c0c0c0"></div>
<div class="b" style="left:17px;top:72px;width:1px;height:17px;background:#e2e2e2"></div>
<div class="b" style="left:17px;top:80px;width:6px;height:1px;background:#e2e2e2"></div>
<div class="r" style="left:26.5px;top:75px"><span>DrawInstanced(4, 64)</span></div>
<div class="b" style="left:0;top:107px;width:590px;height:1px;background:#c0c0c0"></div>
<div class="b" style="left:16px;top:93px"><svg width="7" height="11" viewBox="0 0 7 11" style="display:block;"><path d="M1 1 L5.8 5.5 L1 10" fill="none" stroke="#111" stroke-width="2.2" stroke-linecap="butt" stroke-linejoin="miter"/></svg></div>
<div class="r" style="left:26.5px;top:93px"><span>Copy/Clear Pass #16</span></div>
<div class="b" style="left:0;top:125px;width:590px;height:1px;background:#c0c0c0"></div>
<div class="b" style="left:17px;top:108px;width:1px;height:17px;background:#e2e2e2"></div>
<div class="b" style="left:17px;top:116px;width:6px;height:1px;background:#e2e2e2"></div>
<div class="r" style="left:26.5px;top:111px"><span>DrawIndexedInstanced(3, 1)</span></div>
<div class="b" style="left:0;top:143px;width:590px;height:1px;background:#c0c0c0"></div>
<div class="b" style="left:17px;top:126px;width:1px;height:17px;background:#e2e2e2"></div>
<div class="b" style="left:17px;top:134px;width:6px;height:1px;background:#e2e2e2"></div>
<div class="r" style="left:26.5px;top:129px"><span>DrawIndexedInstanced(6, 1)</span></div>
<div class="b" style="left:0;top:161px;width:590px;height:1px;background:#c0c0c0"></div>
<div class="b" style="left:17px;top:144px;width:1px;height:17px;background:#e2e2e2"></div>
<div class="b" style="left:17px;top:152px;width:6px;height:1px;background:#e2e2e2"></div>
<div class="r" style="left:26.5px;top:147px"><span>Dispatch(10, 1, 1)</span></div>
<div class="b" style="left:0;top:179px;width:590px;height:1px;background:#c0c0c0"></div>
<div class="b" style="left:17px;top:162px;width:1px;height:17px;background:#e2e2e2"></div>
<div class="b" style="left:17px;top:170px;width:6px;height:1px;background:#e2e2e2"></div>
<div class="r" style="left:26.5px;top:165px"><span>CopyBufferRegion(</span><b>Buffer 3861</b><i><svg width="16" height="16" viewBox="0 0 16 16" style="display:block;"><path d="M5.2 10.8 L10.8 5.2" stroke="#666" stroke-width="3.4" stroke-linecap="round"/><path d="M5.2 10.8 L10.8 5.2" stroke="#d2d2d2" stroke-width="1.5" stroke-linecap="round"/><circle cx="4.2" cy="11.8" r="3.2" fill="#d8d8d8" stroke="#626262" stroke-width="1.1"/><circle cx="11.8" cy="4.2" r="3.2" fill="#d8d8d8" stroke="#626262" stroke-width="1.1"/><circle cx="4.2" cy="11.8" r="1.4" fill="#f4f4f4" stroke="#808080" stroke-width=".7"/><circle cx="11.8" cy="4.2" r="1.4" fill="#f4f4f4" stroke="#808080" stroke-width=".7"/></svg></i><span style="margin-right:1.6px">,  </span><b>Buffer 94228</b><i><svg width="16" height="16" viewBox="0 0 16 16" style="display:block;"><path d="M5.2 10.8 L10.8 5.2" stroke="#666" stroke-width="3.4" stroke-linecap="round"/><path d="M5.2 10.8 L10.8 5.2" stroke="#d2d2d2" stroke-width="1.5" stroke-linecap="round"/><circle cx="4.2" cy="11.8" r="3.2" fill="#d8d8d8" stroke="#626262" stroke-width="1.1"/><circle cx="11.8" cy="4.2" r="3.2" fill="#d8d8d8" stroke="#626262" stroke-width="1.1"/><circle cx="4.2" cy="11.8" r="1.4" fill="#f4f4f4" stroke="#808080" stroke-width=".7"/><circle cx="11.8" cy="4.2" r="1.4" fill="#f4f4f4" stroke="#808080" stroke-width=".7"/></svg></i><span>)</span></div>
<div class="b" style="left:0;top:197px;width:590px;height:1px;background:#c0c0c0"></div>
<div class="b" style="left:16px;top:183px"><svg width="7" height="11" viewBox="0 0 7 11" style="display:block;"><path d="M1 1 L5.8 5.5 L1 10" fill="none" stroke="#111" stroke-width="2.2" stroke-linecap="butt" stroke-linejoin="miter"/></svg></div>
<div class="r" style="left:26.5px;top:183px"><span>Copy/Clear Pass #17</span></div>
<div class="b" style="left:0;top:215px;width:590px;height:1px;background:#c0c0c0"></div>
<div class="b" style="left:17px;top:198px;width:1px;height:17px;background:#e2e2e2"></div>
<div class="b" style="left:17px;top:206px;width:6px;height:1px;background:#e2e2e2"></div>
<div class="r" style="left:26.5px;top:201px"><span>Dispatch(1, 1, 1)</span></div>
<div class="b" style="left:0;top:233px;width:590px;height:1px;background:#c0c0c0"></div>
<div class="b" style="left:16px;top:219px"><svg width="7" height="11" viewBox="0 0 7 11" style="display:block;"><path d="M1 1 L5.8 5.5 L1 10" fill="none" stroke="#111" stroke-width="2.2" stroke-linecap="butt" stroke-linejoin="miter"/></svg></div>
<div class="r" style="left:26.5px;top:219px"><span>Copy/Clear Pass #18</span></div>
<div class="b" style="left:0;top:251px;width:590px;height:1px;background:#c0c0c0"></div>
<div class="b" style="left:17px;top:234px;width:1px;height:17px;background:#e2e2e2"></div>
<div class="b" style="left:17px;top:242px;width:6px;height:1px;background:#e2e2e2"></div>
<div class="r" style="left:26.5px;top:237px"><span>DrawIndexedInstanced(3, 1)</span></div>
<div class="b" style="left:0;top:269px;width:590px;height:1px;background:#c0c0c0"></div>
<div class="b" style="left:16px;top:255px"><svg width="7" height="11" viewBox="0 0 7 11" style="display:block;"><path d="M1 1 L5.8 5.5 L1 10" fill="none" stroke="#111" stroke-width="2.2" stroke-linecap="butt" stroke-linejoin="miter"/></svg></div>
<div class="r" style="left:26.5px;top:255px"><span>Copy/Clear Pass #19</span></div>
<div class="b" style="left:0;top:287px;width:590px;height:1px;background:#c0c0c0"></div>
<div class="b" style="left:16px;top:273px"><svg width="7" height="11" viewBox="0 0 7 11" style="display:block;"><path d="M1 1 L5.8 5.5 L1 10" fill="none" stroke="#111" stroke-width="2.2" stroke-linecap="butt" stroke-linejoin="miter"/></svg></div>
<div class="r" style="left:26.5px;top:273px"><span>Colour Pass #12 (1 Targets + Depth)</span></div>
<div class="b" style="left:0;top:305px;width:590px;height:1px;background:#c0c0c0"></div>
<div class="b" style="left:17px;top:288px;width:1px;height:17px;background:#e2e2e2"></div>
<div class="b" style="left:17px;top:296px;width:6px;height:1px;background:#e2e2e2"></div>
<div class="r" style="left:26.5px;top:291px"><span>DrawIndexedInstanced(6, 1)</span></div>
<div class="b" style="left:0;top:323px;width:590px;height:1px;background:#c0c0c0"></div>
<div class="b" style="left:17px;top:306px;width:1px;height:17px;background:#e2e2e2"></div>
<div class="b" style="left:17px;top:314px;width:6px;height:1px;background:#e2e2e2"></div>
<div class="r" style="left:26.5px;top:309px"><span>DrawIndexedInstanced(3, 1)</span></div>
<div class="b" style="left:0;top:341px;width:590px;height:1px;background:#c0c0c0"></div>
<div class="b" style="left:17px;top:324px;width:1px;height:17px;background:#e2e2e2"></div>
<div class="b" style="left:17px;top:332px;width:6px;height:1px;background:#e2e2e2"></div>
<div class="r" style="left:26.5px;top:327px"><span>DiscardResource(</span><b>2D Render Target 97599</b><i><svg width="16" height="16" viewBox="0 0 16 16" style="display:block;"><path d="M5.2 10.8 L10.8 5.2" stroke="#666" stroke-width="3.4" stroke-linecap="round"/><path d="M5.2 10.8 L10.8 5.2" stroke="#d2d2d2" stroke-width="1.5" stroke-linecap="round"/><circle cx="4.2" cy="11.8" r="3.2" fill="#d8d8d8" stroke="#626262" stroke-width="1.1"/><circle cx="11.8" cy="4.2" r="3.2" fill="#d8d8d8" stroke="#626262" stroke-width="1.1"/><circle cx="4.2" cy="11.8" r="1.4" fill="#f4f4f4" stroke="#808080" stroke-width=".7"/><circle cx="11.8" cy="4.2" r="1.4" fill="#f4f4f4" stroke="#808080" stroke-width=".7"/></svg></i><span>)</span></div>
<div class="b" style="left:0;top:359px;width:590px;height:1px;background:#c0c0c0"></div>
<div class="b" style="left:17px;top:342px;width:1px;height:17px;background:#e2e2e2"></div>
<div class="b" style="left:17px;top:350px;width:6px;height:1px;background:#e2e2e2"></div>
<div class="r" style="left:26.5px;top:345px"><span>DrawIndexedInstanced(3, 1)</span></div>
<div class="b" style="left:0;top:377px;width:590px;height:1px;background:#c0c0c0"></div>
<div class="b" style="left:16px;top:363px"><svg width="7" height="11" viewBox="0 0 7 11" style="display:block;"><path d="M1 1 L5.8 5.5 L1 10" fill="none" stroke="#111" stroke-width="2.2" stroke-linecap="butt" stroke-linejoin="miter"/></svg></div>
<div class="r" style="left:26.5px;top:363px"><span>ExecuteIndirect(maxCount 1, count &lt;1&gt;)</span></div>
<div class="b" style="left:0;top:395px;width:590px;height:1px;background:#c0c0c0"></div>
<div class="b" style="left:17px;top:378px;width:1px;height:17px;background:#e2e2e2"></div>
<div class="b" style="left:17px;top:386px;width:6px;height:1px;background:#e2e2e2"></div>
<div class="r" style="left:26.5px;top:381px"><span>CopyBufferRegion(</span><b>Buffer 3861</b><i><svg width="16" height="16" viewBox="0 0 16 16" style="display:block;"><path d="M5.2 10.8 L10.8 5.2" stroke="#666" stroke-width="3.4" stroke-linecap="round"/><path d="M5.2 10.8 L10.8 5.2" stroke="#d2d2d2" stroke-width="1.5" stroke-linecap="round"/><circle cx="4.2" cy="11.8" r="3.2" fill="#d8d8d8" stroke="#626262" stroke-width="1.1"/><circle cx="11.8" cy="4.2" r="3.2" fill="#d8d8d8" stroke="#626262" stroke-width="1.1"/><circle cx="4.2" cy="11.8" r="1.4" fill="#f4f4f4" stroke="#808080" stroke-width=".7"/><circle cx="11.8" cy="4.2" r="1.4" fill="#f4f4f4" stroke="#808080" stroke-width=".7"/></svg></i><span style="margin-right:1.6px">,  </span><b>Buffer 3486</b><i><svg width="16" height="16" viewBox="0 0 16 16" style="display:block;"><path d="M5.2 10.8 L10.8 5.2" stroke="#666" stroke-width="3.4" stroke-linecap="round"/><path d="M5.2 10.8 L10.8 5.2" stroke="#d2d2d2" stroke-width="1.5" stroke-linecap="round"/><circle cx="4.2" cy="11.8" r="3.2" fill="#d8d8d8" stroke="#626262" stroke-width="1.1"/><circle cx="11.8" cy="4.2" r="3.2" fill="#d8d8d8" stroke="#626262" stroke-width="1.1"/><circle cx="4.2" cy="11.8" r="1.4" fill="#f4f4f4" stroke="#808080" stroke-width=".7"/><circle cx="11.8" cy="4.2" r="1.4" fill="#f4f4f4" stroke="#808080" stroke-width=".7"/></svg></i><span>)</span></div>
<div class="b" style="left:0;top:413px;width:590px;height:1px;background:#c0c0c0"></div>
<div class="b" style="left:13px;top:402px"><svg width="11" height="7" viewBox="0 0 11 7" style="display:block;"><path d="M1 1 L5.5 5.8 L10 1" fill="none" stroke="#111" stroke-width="2.2" stroke-linecap="butt" stroke-linejoin="miter"/></svg></div>
<div class="r" style="left:26.5px;top:399px"><span>Colour Pass #13 (1 Targets)</span></div>
<div class="b" style="left:0;top:413px;width:590px;height:18px;background:#4f6b9f"></div>
<div class="b" style="left:548px;top:413px;width:1px;height:18px;background:#8aa0c6"></div>
<div class="b" style="left:0;top:431px;width:590px;height:1px;background:#c0c0c0"></div>
<div class="b" style="left:17px;top:414px;width:1px;height:17px;background:#fff"></div>
<div class="b" style="left:29px;top:414px;width:1px;height:17px;background:#fff"></div>
<div class="b" style="left:29px;top:422px;width:6px;height:1px;background:#fff"></div>
<div class="b" style="left:39px;top:414px"><svg width="16" height="16" viewBox="0 0 16 16" style="display:block;"><rect x="1" y="0.5" width="2" height="15" fill="#c9a063" stroke="#9a7438" stroke-width=".5"/><path d="M3 1.2 L14.5 6 L3 11 Z" fill="#86c41e" stroke="#5f9a0a" stroke-width=".8" stroke-linejoin="round"/><path d="M4 3 L11.5 6 L4 7" fill="#b8e860" opacity=".75"/></svg></div>
<div class="r sel" style="left:60px;top:417px"><span>DrawIndexedInstanced(3, 1)</span></div>
<div class="b" style="left:0;top:449px;width:590px;height:1px;background:#c0c0c0"></div>
<div class="b" style="left:17px;top:432px;width:1px;height:17px;background:#e2e2e2"></div>
<div class="b" style="left:29px;top:432px;width:1px;height:17px;background:#e2e2e2"></div>
<div class="b" style="left:29px;top:440px;width:6px;height:1px;background:#e2e2e2"></div>
<div class="r" style="left:38.5px;top:435px"><span>DiscardResource(</span><b>2D Render Target 97600</b><i><svg width="16" height="16" viewBox="0 0 16 16" style="display:block;"><path d="M5.2 10.8 L10.8 5.2" stroke="#666" stroke-width="3.4" stroke-linecap="round"/><path d="M5.2 10.8 L10.8 5.2" stroke="#d2d2d2" stroke-width="1.5" stroke-linecap="round"/><circle cx="4.2" cy="11.8" r="3.2" fill="#d8d8d8" stroke="#626262" stroke-width="1.1"/><circle cx="11.8" cy="4.2" r="3.2" fill="#d8d8d8" stroke="#626262" stroke-width="1.1"/><circle cx="4.2" cy="11.8" r="1.4" fill="#f4f4f4" stroke="#808080" stroke-width=".7"/><circle cx="11.8" cy="4.2" r="1.4" fill="#f4f4f4" stroke="#808080" stroke-width=".7"/></svg></i><span>)</span></div>
<div class="b" style="left:0;top:467px;width:590px;height:1px;background:#c0c0c0"></div>
<div class="b" style="left:17px;top:450px;width:1px;height:17px;background:#e2e2e2"></div>
<div class="b" style="left:29px;top:450px;width:1px;height:17px;background:#e2e2e2"></div>
<div class="b" style="left:29px;top:458px;width:6px;height:1px;background:#e2e2e2"></div>
<div class="r" style="left:38.5px;top:453px"><span>DiscardResource(</span><b>2D Render Target 97601</b><i><svg width="16" height="16" viewBox="0 0 16 16" style="display:block;"><path d="M5.2 10.8 L10.8 5.2" stroke="#666" stroke-width="3.4" stroke-linecap="round"/><path d="M5.2 10.8 L10.8 5.2" stroke="#d2d2d2" stroke-width="1.5" stroke-linecap="round"/><circle cx="4.2" cy="11.8" r="3.2" fill="#d8d8d8" stroke="#626262" stroke-width="1.1"/><circle cx="11.8" cy="4.2" r="3.2" fill="#d8d8d8" stroke="#626262" stroke-width="1.1"/><circle cx="4.2" cy="11.8" r="1.4" fill="#f4f4f4" stroke="#808080" stroke-width=".7"/><circle cx="11.8" cy="4.2" r="1.4" fill="#f4f4f4" stroke="#808080" stroke-width=".7"/></svg></i><span>)</span></div>
<div class="b" style="left:0;top:485px;width:590px;height:1px;background:#c0c0c0"></div>
<div class="b" style="left:17px;top:468px;width:1px;height:17px;background:#e2e2e2"></div>
<div class="b" style="left:29px;top:468px;width:1px;height:17px;background:#e2e2e2"></div>
<div class="b" style="left:29px;top:476px;width:6px;height:1px;background:#e2e2e2"></div>
<div class="r" style="left:38.5px;top:471px"><span>DiscardResource(</span><b>3D Texture 97602</b><i><svg width="16" height="16" viewBox="0 0 16 16" style="display:block;"><path d="M5.2 10.8 L10.8 5.2" stroke="#666" stroke-width="3.4" stroke-linecap="round"/><path d="M5.2 10.8 L10.8 5.2" stroke="#d2d2d2" stroke-width="1.5" stroke-linecap="round"/><circle cx="4.2" cy="11.8" r="3.2" fill="#d8d8d8" stroke="#626262" stroke-width="1.1"/><circle cx="11.8" cy="4.2" r="3.2" fill="#d8d8d8" stroke="#626262" stroke-width="1.1"/><circle cx="4.2" cy="11.8" r="1.4" fill="#f4f4f4" stroke="#808080" stroke-width=".7"/><circle cx="11.8" cy="4.2" r="1.4" fill="#f4f4f4" stroke="#808080" stroke-width=".7"/></svg></i><span>)</span></div>
<div class="b" style="left:0;top:503px;width:590px;height:1px;background:#c0c0c0"></div>
<div class="b" style="left:17px;top:486px;width:1px;height:17px;background:#e2e2e2"></div>
<div class="b" style="left:29px;top:486px;width:1px;height:17px;background:#e2e2e2"></div>
<div class="b" style="left:29px;top:494px;width:6px;height:1px;background:#e2e2e2"></div>
<div class="r" style="left:38.5px;top:489px"><span>DiscardResource(</span><b>2D Texture 97603</b><i><svg width="16" height="16" viewBox="0 0 16 16" style="display:block;"><path d="M5.2 10.8 L10.8 5.2" stroke="#666" stroke-width="3.4" stroke-linecap="round"/><path d="M5.2 10.8 L10.8 5.2" stroke="#d2d2d2" stroke-width="1.5" stroke-linecap="round"/><circle cx="4.2" cy="11.8" r="3.2" fill="#d8d8d8" stroke="#626262" stroke-width="1.1"/><circle cx="11.8" cy="4.2" r="3.2" fill="#d8d8d8" stroke="#626262" stroke-width="1.1"/><circle cx="4.2" cy="11.8" r="1.4" fill="#f4f4f4" stroke="#808080" stroke-width=".7"/><circle cx="11.8" cy="4.2" r="1.4" fill="#f4f4f4" stroke="#808080" stroke-width=".7"/></svg></i><span>)</span></div>
<div class="b" style="left:0;top:521px;width:590px;height:1px;background:#c0c0c0"></div>
<div class="b" style="left:17px;top:504px;width:1px;height:17px;background:#e2e2e2"></div>
<div class="b" style="left:29px;top:504px;width:1px;height:17px;background:#e2e2e2"></div>
<div class="b" style="left:29px;top:512px;width:6px;height:1px;background:#e2e2e2"></div>
<div class="r" style="left:38.5px;top:507px"><span>DiscardResource(</span><b>2D Texture 97604</b><i><svg width="16" height="16" viewBox="0 0 16 16" style="display:block;"><path d="M5.2 10.8 L10.8 5.2" stroke="#666" stroke-width="3.4" stroke-linecap="round"/><path d="M5.2 10.8 L10.8 5.2" stroke="#d2d2d2" stroke-width="1.5" stroke-linecap="round"/><circle cx="4.2" cy="11.8" r="3.2" fill="#d8d8d8" stroke="#626262" stroke-width="1.1"/><circle cx="11.8" cy="4.2" r="3.2" fill="#d8d8d8" stroke="#626262" stroke-width="1.1"/><circle cx="4.2" cy="11.8" r="1.4" fill="#f4f4f4" stroke="#808080" stroke-width=".7"/><circle cx="11.8" cy="4.2" r="1.4" fill="#f4f4f4" stroke="#808080" stroke-width=".7"/></svg></i><span>)</span></div>
<div class="b" style="left:0;top:539px;width:590px;height:1px;background:#c0c0c0"></div>
<div class="b" style="left:17px;top:522px;width:1px;height:17px;background:#e2e2e2"></div>
<div class="b" style="left:29px;top:522px;width:1px;height:17px;background:#e2e2e2"></div>
<div class="b" style="left:29px;top:530px;width:6px;height:1px;background:#e2e2e2"></div>
<div class="r" style="left:38.5px;top:525px"><span>DiscardResource(</span><b>2D Render Target 95130</b><i><svg width="16" height="16" viewBox="0 0 16 16" style="display:block;"><path d="M5.2 10.8 L10.8 5.2" stroke="#666" stroke-width="3.4" stroke-linecap="round"/><path d="M5.2 10.8 L10.8 5.2" stroke="#d2d2d2" stroke-width="1.5" stroke-linecap="round"/><circle cx="4.2" cy="11.8" r="3.2" fill="#d8d8d8" stroke="#626262" stroke-width="1.1"/><circle cx="11.8" cy="4.2" r="3.2" fill="#d8d8d8" stroke="#626262" stroke-width="1.1"/><circle cx="4.2" cy="11.8" r="1.4" fill="#f4f4f4" stroke="#808080" stroke-width=".7"/><circle cx="11.8" cy="4.2" r="1.4" fill="#f4f4f4" stroke="#808080" stroke-width=".7"/></svg></i><span>)</span></div>
<div class="b" style="left:0;top:557px;width:590px;height:1px;background:#c0c0c0"></div>
<div class="b" style="left:17px;top:540px;width:1px;height:17px;background:#e2e2e2"></div>
<div class="b" style="left:29px;top:540px;width:1px;height:17px;background:#e2e2e2"></div>
<div class="b" style="left:29px;top:548px;width:6px;height:1px;background:#e2e2e2"></div>
<div class="r" style="left:38.5px;top:543px"><span>DiscardResource(</span><b>2D Render Target 97610</b><i><svg width="16" height="16" viewBox="0 0 16 16" style="display:block;"><path d="M5.2 10.8 L10.8 5.2" stroke="#666" stroke-width="3.4" stroke-linecap="round"/><path d="M5.2 10.8 L10.8 5.2" stroke="#d2d2d2" stroke-width="1.5" stroke-linecap="round"/><circle cx="4.2" cy="11.8" r="3.2" fill="#d8d8d8" stroke="#626262" stroke-width="1.1"/><circle cx="11.8" cy="4.2" r="3.2" fill="#d8d8d8" stroke="#626262" stroke-width="1.1"/><circle cx="4.2" cy="11.8" r="1.4" fill="#f4f4f4" stroke="#808080" stroke-width=".7"/><circle cx="11.8" cy="4.2" r="1.4" fill="#f4f4f4" stroke="#808080" stroke-width=".7"/></svg></i><span>)</span></div>
<div class="b" style="left:0;top:575px;width:590px;height:1px;background:#c0c0c0"></div>
<div class="b" style="left:17px;top:558px;width:1px;height:17px;background:#e2e2e2"></div>
<div class="b" style="left:29px;top:558px;width:1px;height:9px;background:#e2e2e2"></div>
<div class="b" style="left:29px;top:566px;width:6px;height:1px;background:#e2e2e2"></div>
<div class="r" style="left:38.5px;top:561px"><span>DiscardResource(</span><b>2D Render Target 97626</b><i><svg width="16" height="16" viewBox="0 0 16 16" style="display:block;"><path d="M5.2 10.8 L10.8 5.2" stroke="#666" stroke-width="3.4" stroke-linecap="round"/><path d="M5.2 10.8 L10.8 5.2" stroke="#d2d2d2" stroke-width="1.5" stroke-linecap="round"/><circle cx="4.2" cy="11.8" r="3.2" fill="#d8d8d8" stroke="#626262" stroke-width="1.1"/><circle cx="11.8" cy="4.2" r="3.2" fill="#d8d8d8" stroke="#626262" stroke-width="1.1"/><circle cx="4.2" cy="11.8" r="1.4" fill="#f4f4f4" stroke="#808080" stroke-width=".7"/><circle cx="11.8" cy="4.2" r="1.4" fill="#f4f4f4" stroke="#808080" stroke-width=".7"/></svg></i><span>)</span></div>
<div class="b" style="left:0;top:593px;width:590px;height:1px;background:#c0c0c0"></div>
<div class="b" style="left:17px;top:576px;width:1px;height:17px;background:#e2e2e2"></div>
<div class="b" style="left:17px;top:584px;width:6px;height:1px;background:#e2e2e2"></div>
<div class="r" style="left:26.5px;top:579px"><span>DrawIndexedInstanced(3, 1)</span></div>
<div class="b" style="left:0;top:611px;width:590px;height:1px;background:#c0c0c0"></div>
<div class="b" style="left:17px;top:594px;width:1px;height:17px;background:#e2e2e2"></div>
<div class="b" style="left:17px;top:602px;width:6px;height:1px;background:#e2e2e2"></div>
<div class="r" style="left:26.5px;top:597px"><span>Dispatch(320, 180, 1)</span></div>
<div class="b" style="left:0;top:629px;width:590px;height:1px;background:#c0c0c0"></div>
<div class="b" style="left:17px;top:612px;width:1px;height:17px;background:#e2e2e2"></div>
<div class="b" style="left:17px;top:620px;width:6px;height:1px;background:#e2e2e2"></div>
<div class="r" style="left:26.5px;top:615px"><span>DiscardResource(</span><b>2D Render Target 97630</b><i><svg width="16" height="16" viewBox="0 0 16 16" style="display:block;"><path d="M5.2 10.8 L10.8 5.2" stroke="#666" stroke-width="3.4" stroke-linecap="round"/><path d="M5.2 10.8 L10.8 5.2" stroke="#d2d2d2" stroke-width="1.5" stroke-linecap="round"/><circle cx="4.2" cy="11.8" r="3.2" fill="#d8d8d8" stroke="#626262" stroke-width="1.1"/><circle cx="11.8" cy="4.2" r="3.2" fill="#d8d8d8" stroke="#626262" stroke-width="1.1"/><circle cx="4.2" cy="11.8" r="1.4" fill="#f4f4f4" stroke="#808080" stroke-width=".7"/><circle cx="11.8" cy="4.2" r="1.4" fill="#f4f4f4" stroke="#808080" stroke-width=".7"/></svg></i><span>)</span></div>
<div class="b" style="left:0;top:647px;width:590px;height:1px;background:#c0c0c0"></div>
<div class="b" style="left:17px;top:630px;width:1px;height:17px;background:#e2e2e2"></div>
<div class="b" style="left:17px;top:638px;width:6px;height:1px;background:#e2e2e2"></div>
<div class="r" style="left:26.5px;top:633px"><span>DrawIndexedInstanced(3, 1)</span></div>
<div class="b" style="left:0;top:665px;width:590px;height:1px;background:#c0c0c0"></div>
<div class="b" style="left:16px;top:651px"><svg width="7" height="11" viewBox="0 0 7 11" style="display:block;"><path d="M1 1 L5.8 5.5 L1 10" fill="none" stroke="#111" stroke-width="2.2" stroke-linecap="butt" stroke-linejoin="miter"/></svg></div>
<div class="r" style="left:26.5px;top:651px"><span>Compute Pass #7</span></div>
<div class="b" style="left:0;top:683px;width:590px;height:1px;background:#c0c0c0"></div>
<div class="b" style="left:17px;top:666px;width:1px;height:17px;background:#e2e2e2"></div>
<div class="b" style="left:17px;top:674px;width:6px;height:1px;background:#e2e2e2"></div>
<div class="r" style="left:26.5px;top:669px"><span>DrawIndexedInstanced(3, 1)</span></div>
<div class="b" style="left:0;top:701px;width:590px;height:1px;background:#c0c0c0"></div>
<div class="b" style="left:13px;top:690px"><svg width="11" height="7" viewBox="0 0 11 7" style="display:block;"><path d="M1 1 L5.5 5.8 L10 1" fill="none" stroke="#111" stroke-width="2.2" stroke-linecap="butt" stroke-linejoin="miter"/></svg></div>
<div class="r" style="left:26.5px;top:687px"><span>Colour Pass #14 (1 Targets)</span></div>
<div class="b" style="left:0;top:719px;width:590px;height:1px;background:#c0c0c0"></div>
<div class="b" style="left:17px;top:702px;width:1px;height:17px;background:#e2e2e2"></div>
<div class="b" style="left:29px;top:702px;width:1px;height:17px;background:#e2e2e2"></div>
<div class="b" style="left:29px;top:710px;width:6px;height:1px;background:#e2e2e2"></div>
<div class="r" style="left:38.5px;top:705px"><span>DrawIndexedInstanced(3, 1)</span></div>
<div class="b" style="left:0;top:737px;width:590px;height:1px;background:#c0c0c0"></div>
<div class="b" style="left:17px;top:720px;width:1px;height:17px;background:#e2e2e2"></div>
<div class="b" style="left:29px;top:720px;width:1px;height:17px;background:#e2e2e2"></div>
<div class="b" style="left:29px;top:728px;width:6px;height:1px;background:#e2e2e2"></div>
<div class="r" style="left:38.5px;top:723px"><span>DiscardResource(</span><b>2D Render Target 97606</b><i><svg width="16" height="16" viewBox="0 0 16 16" style="display:block;"><path d="M5.2 10.8 L10.8 5.2" stroke="#666" stroke-width="3.4" stroke-linecap="round"/><path d="M5.2 10.8 L10.8 5.2" stroke="#d2d2d2" stroke-width="1.5" stroke-linecap="round"/><circle cx="4.2" cy="11.8" r="3.2" fill="#d8d8d8" stroke="#626262" stroke-width="1.1"/><circle cx="11.8" cy="4.2" r="3.2" fill="#d8d8d8" stroke="#626262" stroke-width="1.1"/><circle cx="4.2" cy="11.8" r="1.4" fill="#f4f4f4" stroke="#808080" stroke-width=".7"/><circle cx="11.8" cy="4.2" r="1.4" fill="#f4f4f4" stroke="#808080" stroke-width=".7"/></svg></i><span>)</span></div>
<div class="b" style="left:0;top:755px;width:590px;height:1px;background:#c0c0c0"></div>
<div class="b" style="left:17px;top:738px;width:1px;height:17px;background:#e2e2e2"></div>
<div class="b" style="left:29px;top:738px;width:1px;height:9px;background:#e2e2e2"></div>
<div class="b" style="left:29px;top:746px;width:6px;height:1px;background:#e2e2e2"></div>
<div class="r" style="left:38.5px;top:741px"><span>DiscardResource(</span><b>2D Render Target 97605</b><i><svg width="16" height="16" viewBox="0 0 16 16" style="display:block;"><path d="M5.2 10.8 L10.8 5.2" stroke="#666" stroke-width="3.4" stroke-linecap="round"/><path d="M5.2 10.8 L10.8 5.2" stroke="#d2d2d2" stroke-width="1.5" stroke-linecap="round"/><circle cx="4.2" cy="11.8" r="3.2" fill="#d8d8d8" stroke="#626262" stroke-width="1.1"/><circle cx="11.8" cy="4.2" r="3.2" fill="#d8d8d8" stroke="#626262" stroke-width="1.1"/><circle cx="4.2" cy="11.8" r="1.4" fill="#f4f4f4" stroke="#808080" stroke-width=".7"/><circle cx="11.8" cy="4.2" r="1.4" fill="#f4f4f4" stroke="#808080" stroke-width=".7"/></svg></i><span>)</span></div>
<div class="b" style="left:0;top:773px;width:590px;height:1px;background:#c0c0c0"></div>
<div class="b" style="left:17px;top:756px;width:1px;height:17px;background:#e2e2e2"></div>
<div class="b" style="left:17px;top:764px;width:6px;height:1px;background:#e2e2e2"></div>
<div class="r" style="left:26.5px;top:759px"><span>DrawIndexedInstanced(3, 1)</span></div>
<div class="b" style="left:0;top:791px;width:590px;height:1px;background:#c0c0c0"></div>
<div class="b" style="left:17px;top:774px;width:1px;height:17px;background:#e2e2e2"></div>
<div class="b" style="left:17px;top:782px;width:6px;height:1px;background:#e2e2e2"></div>
<div class="r" style="left:26.5px;top:777px"><span>DrawIndexedInstanced(3, 1)</span></div>
<div class="b" style="left:0;top:809px;width:590px;height:1px;background:#c0c0c0"></div>
<div class="b" style="left:17px;top:792px;width:1px;height:17px;background:#e2e2e2"></div>
<div class="b" style="left:17px;top:800px;width:6px;height:1px;background:#e2e2e2"></div>
<div class="r" style="left:26.5px;top:795px"><span>DiscardResource(</span><b>2D Texture 97607</b><i><svg width="16" height="16" viewBox="0 0 16 16" style="display:block;"><path d="M5.2 10.8 L10.8 5.2" stroke="#666" stroke-width="3.4" stroke-linecap="round"/><path d="M5.2 10.8 L10.8 5.2" stroke="#d2d2d2" stroke-width="1.5" stroke-linecap="round"/><circle cx="4.2" cy="11.8" r="3.2" fill="#d8d8d8" stroke="#626262" stroke-width="1.1"/><circle cx="11.8" cy="4.2" r="3.2" fill="#d8d8d8" stroke="#626262" stroke-width="1.1"/><circle cx="4.2" cy="11.8" r="1.4" fill="#f4f4f4" stroke="#808080" stroke-width=".7"/><circle cx="11.8" cy="4.2" r="1.4" fill="#f4f4f4" stroke="#808080" stroke-width=".7"/></svg></i><span>)</span></div>
<div class="b" style="left:0;top:827px;width:590px;height:1px;background:#c0c0c0"></div>
<div class="b" style="left:17px;top:810px;width:1px;height:17px;background:#e2e2e2"></div>
<div class="b" style="left:17px;top:818px;width:6px;height:1px;background:#e2e2e2"></div>
<div class="r" style="left:26.5px;top:813px"><span>Dispatch(10, 6, 1)</span></div>
<div class="b" style="left:0;top:845px;width:590px;height:1px;background:#c0c0c0"></div>
<div class="b" style="left:17px;top:828px;width:1px;height:17px;background:#e2e2e2"></div>
<div class="b" style="left:17px;top:836px;width:6px;height:1px;background:#e2e2e2"></div>
<div class="r" style="left:26.5px;top:831px"><span>DiscardResource(</span><b>2D Render Target 97608</b><i><svg width="16" height="16" viewBox="0 0 16 16" style="display:block;"><path d="M5.2 10.8 L10.8 5.2" stroke="#666" stroke-width="3.4" stroke-linecap="round"/><path d="M5.2 10.8 L10.8 5.2" stroke="#d2d2d2" stroke-width="1.5" stroke-linecap="round"/><circle cx="4.2" cy="11.8" r="3.2" fill="#d8d8d8" stroke="#626262" stroke-width="1.1"/><circle cx="11.8" cy="4.2" r="3.2" fill="#d8d8d8" stroke="#626262" stroke-width="1.1"/><circle cx="4.2" cy="11.8" r="1.4" fill="#f4f4f4" stroke="#808080" stroke-width=".7"/><circle cx="11.8" cy="4.2" r="1.4" fill="#f4f4f4" stroke="#808080" stroke-width=".7"/></svg></i><span>)</span></div>
<div class="b" style="left:0;top:863px;width:590px;height:1px;background:#c0c0c0"></div>
<div class="b" style="left:17px;top:846px;width:1px;height:17px;background:#e2e2e2"></div>
<div class="b" style="left:17px;top:854px;width:6px;height:1px;background:#e2e2e2"></div>
<div class="r" style="left:26.5px;top:849px"><span>DrawIndexedInstanced(3, 1)</span></div>
</div>
<div class="b" style="left:5px;top:1140px;width:604px;height:14px;background:#e3e3e3"></div>
<div class="b" style="left:9px;top:1142px"><svg width="7" height="10" viewBox="0 0 7 10" style="display:block;"><path d="M6 1 L1.2 5.0 L6 9" fill="none" stroke="#666" stroke-width="2.6" stroke-linecap="butt" stroke-linejoin="miter"/></svg></div>
<div class="b" style="left:585px;top:1142px"><svg width="7" height="10" viewBox="0 0 7 10" style="display:block;"><path d="M1 1 L5.8 5.0 L1 9" fill="none" stroke="#666" stroke-width="2.6" stroke-linecap="butt" stroke-linejoin="miter"/></svg></div>
<div class="b" style="left:83px;top:1141px;width:466px;height:12px;background:#646464;border-radius:5px"></div>
<div class="b" style="left:0px;top:1164px;width:614px;height:207px;border:1px solid #000;border-radius:2px;box-sizing:border-box"></div>
<div class="b" style="left:1px;top:1165px;width:612px;height:15px;background:#bdbdbd;border-bottom:1px solid #666"></div>
<div class="t" style="left:5px;top:1165px;">API Inspector</div>
<div class="b" style="left:600px;top:1167px"><svg width="9" height="9" viewBox="0 0 9 9" style="display:block;"><path d="M0.6 0.6 L8.4 8.4 M8.4 0.6 L0.6 8.4" stroke="#111" stroke-width="1.4" fill="none"/></svg></div>
<div class="b" style="left:4px;top:1183px;width:606px;height:157px;border:1px solid #000;background:#fff"></div>
<div class="b" style="left:5px;top:1184px;width:589px;height:16px;background:#efefef"></div>
<div class="b" style="left:5px;top:1200px;width:589px;height:1px;background:#000"></div>
<div class="b" style="left:155px;top:1184px;width:1px;height:17px;background:#000"></div>
<div class="b" style="left:593px;top:1184px;width:1px;height:17px;background:#000"></div>
<div class="t" style="left:9px;top:1187px;">EID</div>
<div class="t" style="left:160px;top:1187px;">Event</div>
<div class="b" style="left:594px;top:1184px;width:15px;height:155px;background:#e3e3e3"></div>
<div class="b" style="left:597px;top:1188px"><svg width="10" height="7" viewBox="0 0 10 7" style="display:block;"><path d="M1 6 L5.0 1.2 L9 6" fill="none" stroke="#666" stroke-width="2.6" stroke-linecap="butt" stroke-linejoin="miter"/></svg></div>
<div class="b" style="left:597px;top:1327px"><svg width="10" height="7" viewBox="0 0 10 7" style="display:block;"><path d="M1 1 L5.0 5.8 L9 1" fill="none" stroke="#666" stroke-width="2.6" stroke-linecap="butt" stroke-linejoin="miter"/></svg></div>
<div class="b" style="left:595px;top:1200px;width:12px;height:48px;background:#646464;border-radius:5px"></div>
<div class="b" style="left:5px;top:1201px;width:589px;height:138px;overflow:hidden">
<div class="b" style="left:150px;top:0;width:1px;height:138px;background:#c0c0c0"></div>
<div class="b" style="left:0;top:21px;width:589px;height:1px;background:#c0c0c0"></div>
<div class="b" style="left:10px;top:4px"><svg width="8" height="12" viewBox="0 0 8 12" style="display:block;"><path d="M1 1 L6.8 6.0 L1 11" fill="none" stroke="#111" stroke-width="2.2" stroke-linecap="butt" stroke-linejoin="miter"/></svg></div>
<div class="r" style="left:24px;top:4px"><span>7799</span></div>
<div class="r" style="left:153.5px;top:4px"><span>EndQuery(</span><b>Query Heap 3766</b><i><svg width="16" height="16" viewBox="0 0 16 16" style="display:block;"><path d="M5.2 10.8 L10.8 5.2" stroke="#666" stroke-width="3.4" stroke-linecap="round"/><path d="M5.2 10.8 L10.8 5.2" stroke="#d2d2d2" stroke-width="1.5" stroke-linecap="round"/><circle cx="4.2" cy="11.8" r="3.2" fill="#d8d8d8" stroke="#626262" stroke-width="1.1"/><circle cx="11.8" cy="4.2" r="3.2" fill="#d8d8d8" stroke="#626262" stroke-width="1.1"/><circle cx="4.2" cy="11.8" r="1.4" fill="#f4f4f4" stroke="#808080" stroke-width=".7"/><circle cx="11.8" cy="4.2" r="1.4" fill="#f4f4f4" stroke="#808080" stroke-width=".7"/></svg></i><span>,  D3D12_QUERY_TYPE_TIMESTAMP,  56)</span></div>
<div class="b" style="left:0;top:43px;width:589px;height:1px;background:#c0c0c0"></div>
<div class="b" style="left:10px;top:26px"><svg width="8" height="12" viewBox="0 0 8 12" style="display:block;"><path d="M1 1 L6.8 6.0 L1 11" fill="none" stroke="#111" stroke-width="2.2" stroke-linecap="butt" stroke-linejoin="miter"/></svg></div>
<div class="r" style="left:24px;top:26px"><span>7800</span></div>
<div class="r" style="left:153.5px;top:26px"><span>SetPipelineState(</span><b>Pipeline State 1429</b><i><svg width="16" height="16" viewBox="0 0 16 16" style="display:block;"><path d="M5.2 10.8 L10.8 5.2" stroke="#666" stroke-width="3.4" stroke-linecap="round"/><path d="M5.2 10.8 L10.8 5.2" stroke="#d2d2d2" stroke-width="1.5" stroke-linecap="round"/><circle cx="4.2" cy="11.8" r="3.2" fill="#d8d8d8" stroke="#626262" stroke-width="1.1"/><circle cx="11.8" cy="4.2" r="3.2" fill="#d8d8d8" stroke="#626262" stroke-width="1.1"/><circle cx="4.2" cy="11.8" r="1.4" fill="#f4f4f4" stroke="#808080" stroke-width=".7"/><circle cx="11.8" cy="4.2" r="1.4" fill="#f4f4f4" stroke="#808080" stroke-width=".7"/></svg></i><span>)</span></div>
<div class="b" style="left:0;top:65px;width:589px;height:1px;background:#c0c0c0"></div>
<div class="b" style="left:10px;top:48px"><svg width="8" height="12" viewBox="0 0 8 12" style="display:block;"><path d="M1 1 L6.8 6.0 L1 11" fill="none" stroke="#111" stroke-width="2.2" stroke-linecap="butt" stroke-linejoin="miter"/></svg></div>
<div class="r" style="left:24px;top:48px"><span>7801</span></div>
<div class="r" style="left:153.5px;top:48px"><span>IASetIndexBuffer(</span><b>Buffer 302</b><i><svg width="16" height="16" viewBox="0 0 16 16" style="display:block;"><path d="M5.2 10.8 L10.8 5.2" stroke="#666" stroke-width="3.4" stroke-linecap="round"/><path d="M5.2 10.8 L10.8 5.2" stroke="#d2d2d2" stroke-width="1.5" stroke-linecap="round"/><circle cx="4.2" cy="11.8" r="3.2" fill="#d8d8d8" stroke="#626262" stroke-width="1.1"/><circle cx="11.8" cy="4.2" r="3.2" fill="#d8d8d8" stroke="#626262" stroke-width="1.1"/><circle cx="4.2" cy="11.8" r="1.4" fill="#f4f4f4" stroke="#808080" stroke-width=".7"/><circle cx="11.8" cy="4.2" r="1.4" fill="#f4f4f4" stroke="#808080" stroke-width=".7"/></svg></i><span>)</span></div>
<div class="b" style="left:0;top:87px;width:589px;height:1px;background:#c0c0c0"></div>
<div class="b" style="left:10px;top:70px"><svg width="8" height="12" viewBox="0 0 8 12" style="display:block;"><path d="M1 1 L6.8 6.0 L1 11" fill="none" stroke="#111" stroke-width="2.2" stroke-linecap="butt" stroke-linejoin="miter"/></svg></div>
<div class="r" style="left:24px;top:70px"><span>7802</span></div>
<div class="r" style="left:153.5px;top:70px"><span>SetGraphicsRootSignature(</span><b>Root Signature 1232</b><i><svg width="16" height="16" viewBox="0 0 16 16" style="display:block;"><path d="M5.2 10.8 L10.8 5.2" stroke="#666" stroke-width="3.4" stroke-linecap="round"/><path d="M5.2 10.8 L10.8 5.2" stroke="#d2d2d2" stroke-width="1.5" stroke-linecap="round"/><circle cx="4.2" cy="11.8" r="3.2" fill="#d8d8d8" stroke="#626262" stroke-width="1.1"/><circle cx="11.8" cy="4.2" r="3.2" fill="#d8d8d8" stroke="#626262" stroke-width="1.1"/><circle cx="4.2" cy="11.8" r="1.4" fill="#f4f4f4" stroke="#808080" stroke-width=".7"/><circle cx="11.8" cy="4.2" r="1.4" fill="#f4f4f4" stroke="#808080" stroke-width=".7"/></svg></i><span>)</span></div>
<div class="b" style="left:0;top:109px;width:589px;height:1px;background:#c0c0c0"></div>
<div class="b" style="left:10px;top:92px"><svg width="8" height="12" viewBox="0 0 8 12" style="display:block;"><path d="M1 1 L6.8 6.0 L1 11" fill="none" stroke="#111" stroke-width="2.2" stroke-linecap="butt" stroke-linejoin="miter"/></svg></div>
<div class="r" style="left:24px;top:92px"><span>7803</span></div>
<div class="r" style="left:153.5px;top:92px"><span>IASetVertexBuffers(0, D3D12_VERTEX_BUFFER_VIEW[7])</span></div>
<div class="b" style="left:0;top:131px;width:589px;height:1px;background:#c0c0c0"></div>
<div class="b" style="left:10px;top:114px"><svg width="8" height="12" viewBox="0 0 8 12" style="display:block;"><path d="M1 1 L6.8 6.0 L1 11" fill="none" stroke="#111" stroke-width="2.2" stroke-linecap="butt" stroke-linejoin="miter"/></svg></div>
<div class="r" style="left:24px;top:114px"><span>7804</span></div>
<div class="r" style="left:153.5px;top:114px"><span>OMSetRenderTargets({  </span><b>2D Render Target 97599</b><i><svg width="16" height="16" viewBox="0 0 16 16" style="display:block;"><path d="M5.2 10.8 L10.8 5.2" stroke="#666" stroke-width="3.4" stroke-linecap="round"/><path d="M5.2 10.8 L10.8 5.2" stroke="#d2d2d2" stroke-width="1.5" stroke-linecap="round"/><circle cx="4.2" cy="11.8" r="3.2" fill="#d8d8d8" stroke="#626262" stroke-width="1.1"/><circle cx="11.8" cy="4.2" r="3.2" fill="#d8d8d8" stroke="#626262" stroke-width="1.1"/><circle cx="4.2" cy="11.8" r="1.4" fill="#f4f4f4" stroke="#808080" stroke-width=".7"/><circle cx="11.8" cy="4.2" r="1.4" fill="#f4f4f4" stroke="#808080" stroke-width=".7"/></svg></i><span>  })</span></div>
<div class="b" style="left:10px;top:136px"><svg width="8" height="12" viewBox="0 0 8 12" style="display:block;"><path d="M1 1 L6.8 6.0 L1 11" fill="none" stroke="#111" stroke-width="2.2" stroke-linecap="butt" stroke-linejoin="miter"/></svg></div>
</div>
<div class="t" style="left:279px;top:1340px;">Callstack</div>
<div class="b" style="left:297px;top:1357px"><svg width="20" height="9" viewBox="0 0 20 9" style="display:block;"><path d="M0 9 L10 0 L20 9 Z" fill="#000"/></svg></div>
<div class="b" style="left:141.0px;top:1353.5px;width:7px;height:7px;background:#000;border-radius:50%"></div>
<div class="b" style="left:151.5px;top:1353.5px;width:7px;height:7px;background:#000;border-radius:50%"></div>
<div class="b" style="left:162.0px;top:1353.5px;width:7px;height:7px;background:#000;border-radius:50%"></div>
<div class="b" style="left:444.0px;top:1353.5px;width:7px;height:7px;background:#000;border-radius:50%"></div>
<div class="b" style="left:454.5px;top:1353.5px;width:7px;height:7px;background:#000;border-radius:50%"></div>
<div class="b" style="left:465.0px;top:1353.5px;width:7px;height:7px;background:#000;border-radius:50%"></div>
<div class="b" style="left:7px;top:1378px"><svg width="16" height="16" viewBox="0 0 16 16" style="display:block;"><path d="M2.5 8 L2.5 15 L13.5 15 L13.5 8 Z" fill="#e6e6e6" stroke="#a8a8a8" stroke-width=".8"/><path d="M0.8 8.6 L8 1.2 L15.2 8.6 L13.8 9.6 L8 3.8 L2.2 9.6 Z" fill="#cfcfcf" stroke="#a0a0a0" stroke-width=".7" stroke-linejoin="round"/><rect x="6.2" y="9.5" width="3.6" height="5.5" fill="#d6d6d6" stroke="#a0a0a0" stroke-width=".7"/></svg></div>
<div class="t" style="left:26px;top:1380px;color:#a0a0a0">Replay Context: Local</div>
<div class="b" style="left:170px;top:1383px"><svg width="8" height="4" viewBox="0 0 8 4" style="display:block;"><path d="M0 0 H8 L4.0 4 Z" fill="#999"/></svg></div>
<div class="b" style="left:186px;top:1377px"><svg width="17" height="16" viewBox="0 0 17 16" style="display:block;"><path d="M1 8.5 L4 5.8 L6.6 9 L13 1.2 L15.6 3.4 L6.8 14.6 Z" fill="#7fd11a" stroke="#4f9a00" stroke-width=".9" stroke-linejoin="round"/><path d="M2.6 8.3 L4 7.2 L6.6 10.6 L13.2 2.8" fill="none" stroke="#c9f47a" stroke-width=".9"/></svg></div>
<div class="t" style="left:207px;top:1380px;">CaravanSandWitch-Win64-Shipping_2025.04.02_14.18.59_frame1919.rdc loaded. No problems detected.</div>
<div class="b" style="left:619px;top:196px;width:1941px;height:1175px;border:1px solid #000;border-top:none;border-radius:0 0 2px 2px"></div>
<div class="b" style="left:1586px;top:196px;width:974px;height:1px;background:#000"></div>
<div class="tab" style="left:619px;width:136px;top:173px;height:24px;background:#e3e3e3"></div>
<div class="b" style="left:623px;top:177px"><svg width="16" height="16" viewBox="0 0 16 16" style="display:block;"><rect width="16" height="16" fill="#3bb779"/><circle cx="7.9" cy="7.1" r="2.4" fill="none" stroke="#fff" stroke-width="1"/><path d="M2.4 10.9 Q4 9.7 5.8 9.5 Q7.9 8.9 10 9.5 Q11.8 9.7 13.6 10.9" fill="none" stroke="#fff" stroke-width=".9" stroke-linecap="round"/></svg></div>
<div class="t" style="left:643px;top:179px;">Texture Viewer</div>
<div class="b" style="left:738px;top:180px"><svg width="9" height="9" viewBox="0 0 9 9" style="display:block;"><path d="M0.6 0.6 L8.4 8.4 M8.4 0.6 L0.6 8.4" stroke="#111" stroke-width="1.4" fill="none"/></svg></div>
<div class="tab" style="left:754px;width:138px;top:173px;height:24px;border-bottom:1px solid #6b6b6b"></div>
<div class="b" style="left:759px;top:177px"><svg width="16" height="16" viewBox="0 0 16 16" style="display:block;"><rect width="16" height="16" fill="#3bb779"/><circle cx="7.9" cy="7.1" r="2.4" fill="none" stroke="#fff" stroke-width="1"/><path d="M2.4 10.9 Q4 9.7 5.8 9.5 Q7.9 8.9 10 9.5 Q11.8 9.7 13.6 10.9" fill="none" stroke="#fff" stroke-width=".9" stroke-linecap="round"/></svg></div>
<div class="t" style="left:778px;top:179px;">Pipeline State</div>
<div class="b" style="left:875px;top:180px"><svg width="9" height="9" viewBox="0 0 9 9" style="display:block;"><path d="M0.6 0.6 L8.4 8.4 M8.4 0.6 L0.6 8.4" stroke="#111" stroke-width="1.4" fill="none"/></svg></div>
<div class="tab" style="left:891px;width:119px;top:173px;height:24px;border-bottom:1px solid #6b6b6b"></div>
<div class="b" style="left:896px;top:177px"><svg width="16" height="16" viewBox="0 0 16 16" style="display:block;"><rect width="16" height="16" fill="#3bb779"/><circle cx="7.9" cy="7.1" r="2.4" fill="none" stroke="#fff" stroke-width="1"/><path d="M2.4 10.9 Q4 9.7 5.8 9.5 Q7.9 8.9 10 9.5 Q11.8 9.7 13.6 10.9" fill="none" stroke="#fff" stroke-width=".9" stroke-linecap="round"/></svg></div>
<div class="t" style="left:915px;top:179px;">Mesh Viewer</div>
<div class="b" style="left:993px;top:180px"><svg width="9" height="9" viewBox="0 0 9 9" style="display:block;"><path d="M0.6 0.6 L8.4 8.4 M8.4 0.6 L0.6 8.4" stroke="#111" stroke-width="1.4" fill="none"/></svg></div>
<div class="tab" style="left:1009px;width:161px;top:173px;height:24px;border-bottom:1px solid #6b6b6b"></div>
<div class="b" style="left:1014px;top:177px"><svg width="16" height="16" viewBox="0 0 16 16" style="display:block;"><rect width="16" height="16" fill="#3bb779"/><circle cx="7.9" cy="7.1" r="2.4" fill="none" stroke="#fff" stroke-width="1"/><path d="M2.4 10.9 Q4 9.7 5.8 9.5 Q7.9 8.9 10 9.5 Q11.8 9.7 13.6 10.9" fill="none" stroke="#fff" stroke-width=".9" stroke-linecap="round"/></svg></div>
<div class="t" style="left:1033px;top:179px;">Launch Application</div>
<div class="b" style="left:1153px;top:180px"><svg width="9" height="9" viewBox="0 0 9 9" style="display:block;"><path d="M0.6 0.6 L8.4 8.4 M8.4 0.6 L0.6 8.4" stroke="#111" stroke-width="1.4" fill="none"/></svg></div>
<div class="tab" style="left:1169px;width:161px;top:173px;height:24px;border-bottom:1px solid #6b6b6b"></div>
<div class="b" style="left:1174px;top:177px"><svg width="16" height="16" viewBox="0 0 16 16" style="display:block;"><rect width="16" height="16" fill="#3bb779"/><circle cx="7.9" cy="7.1" r="2.4" fill="none" stroke="#fff" stroke-width="1"/><path d="M2.4 10.9 Q4 9.7 5.8 9.5 Q7.9 8.9 10 9.5 Q11.8 9.7 13.6 10.9" fill="none" stroke="#fff" stroke-width=".9" stroke-linecap="round"/></svg></div>
<div class="t" style="left:1193px;top:179px;">Resource Inspector</div>
<div class="b" style="left:1313px;top:180px"><svg width="9" height="9" viewBox="0 0 9 9" style="display:block;"><path d="M0.6 0.6 L8.4 8.4 M8.4 0.6 L0.6 8.4" stroke="#111" stroke-width="1.4" fill="none"/></svg></div>
<div class="tab" style="left:1329px;width:258px;top:173px;height:24px;border-bottom:1px solid #6b6b6b"></div>
<div class="b" style="left:1334px;top:177px"><svg width="16" height="16" viewBox="0 0 16 16" style="display:block;"><rect width="16" height="16" fill="#3bb779"/><circle cx="7.9" cy="7.1" r="2.4" fill="none" stroke="#fff" stroke-width="1"/><path d="M2.4 10.9 Q4 9.7 5.8 9.5 Q7.9 8.9 10 9.5 Q11.8 9.7 13.6 10.9" fill="none" stroke="#fff" stroke-width=".9" stroke-linecap="round"/></svg></div>
<div class="t" style="left:1353px;top:179px;">CaravanSandWitch_Win64_Shipping [<span style="letter-spacing:-3.2px">···</span></div>
<div class="b" style="left:1570px;top:180px"><svg width="9" height="9" viewBox="0 0 9 9" style="display:block;"><path d="M0.6 0.6 L8.4 8.4 M8.4 0.6 L0.6 8.4" stroke="#111" stroke-width="1.4" fill="none"/></svg></div>
<div class="grp" style="left:623px;top:200px;width:365px"></div>
<div class="t" style="left:629px;top:210px;">Channels</div>
<div class="cb" style="left:680px;top:205px;width:95px;height:22px"></div>
<div class="t" style="left:683px;top:210px;">RGBA</div>
<div class="b" style="left:762px;top:213px"><svg width="11" height="7" viewBox="0 0 11 7" style="display:block;"><path d="M1 1 L5.5 5.8 L10 1" fill="none" stroke="#111" stroke-width="1.6" stroke-linecap="butt" stroke-linejoin="miter"/></svg></div>
<div class="b" style="left:778px;top:203px;width:1px;height:26px;background:#111"></div>
<div class="b" style="left:783px;top:210px;width:12px;height:12px;border:1.2px solid #000;border-radius:50%"></div>
<div class="b" style="left:786px;top:213px;width:6px;height:6px;border-radius:50%;background:#000"></div>
<div class="t" style="left:798px;top:210px;">Depth</div>
<div class="b" style="left:832px;top:210px;width:12px;height:12px;border:1.2px solid #000;border-radius:50%"></div>
<div class="t" style="left:847px;top:210px;">Stencil</div>
<div class="b" style="left:896px;top:208px"><div style="width:15px;height:15px;border-radius:50%;background:radial-gradient(circle,rgba(255,255,255,.95) 0,rgba(255,255,255,.6) 30%,rgba(255,255,255,0) 70%),conic-gradient(#f4e820,#ff9a20 45deg,#ff2a2a 100deg,#f02ad0 150deg,#8a30f0 190deg,#2a50ff 235deg,#20d0e8 285deg,#30d840 325deg,#f4e820);box-shadow:0 0 0 .6px #d0d0d0"></div></div>
<div class="b" style="left:918px;top:204px;width:24px;height:24px;border:1px solid #222;background:#c4c9d4"></div>
<div class="b" style="left:923px;top:209px"><svg width="14" height="14" viewBox="0 0 14 14" style="display:block;"><rect x="0.5" y="0.5" width="13" height="13" fill="#fff" stroke="#8a6a3a" stroke-width="1"/><rect x="1" y="1" width="2" height="2" fill="#111"/><rect x="5" y="1" width="2" height="2" fill="#111"/><rect x="9" y="1" width="2" height="2" fill="#111"/><rect x="3" y="3" width="2" height="2" fill="#111"/><rect x="7" y="3" width="2" height="2" fill="#111"/><rect x="11" y="3" width="2" height="2" fill="#111"/><rect x="1" y="5" width="2" height="2" fill="#111"/><rect x="5" y="5" width="2" height="2" fill="#111"/><rect x="9" y="5" width="2" height="2" fill="#111"/><rect x="3" y="7" width="2" height="2" fill="#111"/><rect x="7" y="7" width="2" height="2" fill="#111"/><rect x="11" y="7" width="2" height="2" fill="#111"/><rect x="1" y="9" width="2" height="2" fill="#111"/><rect x="5" y="9" width="2" height="2" fill="#111"/><rect x="9" y="9" width="2" height="2" fill="#111"/><rect x="3" y="11" width="2" height="2" fill="#111"/><rect x="7" y="11" width="2" height="2" fill="#111"/><rect x="11" y="11" width="2" height="2" fill="#111"/></svg></div>
<div class="b" style="left:945px;top:203px;width:1px;height:26px;background:#111"></div>
<div class="b" style="left:949px;top:204px;width:32px;height:24px;border:1px solid #222;background:#c4c9d4"></div>
<div class="b" style="left:961px;top:213px"><svg width="8" height="7" viewBox="0 0 8 7" style="display:block;"><path d="M0.6 0.6 L4 3.6 L7.4 0.6 M4 3.6 V6.8" stroke="#111" stroke-width="1" fill="none"/></svg></div>
<div class="grp" style="left:991px;top:200px;width:350px"></div>
<div class="t" style="left:997px;top:210px;">Subresource</div>
<div class="b" style="left:1067px;top:203px;width:1px;height:26px;background:#111"></div>
<div class="t" style="left:1071px;top:210px;">Mip</div>
<div class="cbd" style="left:1091px;top:205px;width:107px;height:22px"></div>
<div class="t" style="left:1094px;top:210px;color:#a8a8a8">0 - 2560x1440</div>
<div class="b" style="left:1183px;top:213px"><svg width="11" height="7" viewBox="0 0 11 7" style="display:block;"><path d="M1 1 L5.5 5.8 L10 1" fill="none" stroke="#aaa" stroke-width="1.4" stroke-linecap="butt" stroke-linejoin="miter"/></svg></div>
<div class="t" style="left:1199px;top:210px;">Slice/Face</div>
<div class="cbd" style="left:1262px;top:205px;width:72px;height:22px"></div>
<div class="b" style="left:1320px;top:213px"><svg width="11" height="7" viewBox="0 0 11 7" style="display:block;"><path d="M1 1 L5.5 5.8 L10 1" fill="none" stroke="#aaa" stroke-width="1.4" stroke-linecap="butt" stroke-linejoin="miter"/></svg></div>
<div class="grp" style="left:1344px;top:200px;width:224px"></div>
<div class="t" style="left:1351px;top:210px;">Actions</div>
<div class="b" style="left:1399px;top:208px"><svg width="16" height="16" viewBox="0 0 16 16" style="display:block;"><rect x="1" y="1" width="14" height="14" rx="1" fill="#3a8be0" stroke="#1d5fb4" stroke-width="1"/><rect x="3.2" y="1.8" width="9.6" height="6" fill="#fff"/><path d="M4.2 3.5 H11.8 M4.2 5.5 H11.8" stroke="#9ab" stroke-width=".8" stroke-dasharray="2 1"/><rect x="4.5" y="10" width="7" height="5" fill="#e8eef6"/><rect x="6" y="11" width="2" height="3.4" fill="#345"/></svg></div>
<div class="b" style="left:1425px;top:208px"><svg width="16" height="16" viewBox="0 0 16 16" style="display:block;"><path d="M1.5 1.5 H7.5 L10 4 V11.5 H1.5 Z" fill="#f0f0f0" stroke="#b8b8b8" stroke-width=".9"/><path d="M5.5 4.5 H11.5 L14.5 7.5 V15 H5.5 Z" fill="#f6f6f6" stroke="#b0b0b0" stroke-width=".9"/><path d="M11.5 4.5 V7.5 H14.5" fill="none" stroke="#b0b0b0" stroke-width=".8"/></svg></div>
<div class="b" style="left:1451px;top:208px"><svg width="16" height="16" viewBox="0 0 16 16" style="display:block;"><path d="M2.5 1 H9.5 L13 4.5 V14.5 H2.5 Z" fill="#f6f6f6" stroke="#b0b0b0" stroke-width=".9"/><path d="M9.5 1 V4.5 H13" fill="#e4e4e4" stroke="#b0b0b0" stroke-width=".8"/><path d="M9 8.5 L6.3 11.5 L9 14.5 M12 8.5 L14.7 11.5 L12 14.5" fill="none" stroke="#1f6fd8" stroke-width="1.8" stroke-linejoin="round" stroke-linecap="round"/></svg></div>
<div class="b" style="left:1477px;top:208px"><svg width="16" height="16" viewBox="0 0 16 16" style="display:block;"><rect x="3" y="1" width="3.5" height="4" rx="1" fill="#8a8a8a" stroke="#555" stroke-width=".8"/><rect x="9.5" y="1" width="3.5" height="4" rx="1" fill="#8a8a8a" stroke="#555" stroke-width=".8"/><path d="M1 14 L1 9 L3 4.5 L6.5 4.5 L7.3 9 L7.3 14 Z" fill="#9a9a9a" stroke="#555" stroke-width=".9"/><path d="M15 14 L15 9 L13 4.5 L9.5 4.5 L8.7 9 L8.7 14 Z" fill="#9a9a9a" stroke="#555" stroke-width=".9"/><rect x="6.5" y="6" width="3" height="3.5" fill="#777" stroke="#555" stroke-width=".6"/><rect x="1.3" y="11" width="5.7" height="2.6" fill="#c8c8c8"/><rect x="9" y="11" width="5.7" height="2.6" fill="#c8c8c8"/></svg></div>
<div class="b" style="left:1503px;top:208px"><svg width="16" height="16" viewBox="0 0 16 16" style="display:block;"><path d="M5.2 10.8 L10.8 5.2" stroke="#666" stroke-width="3.4" stroke-linecap="round"/><path d="M5.2 10.8 L10.8 5.2" stroke="#d2d2d2" stroke-width="1.5" stroke-linecap="round"/><circle cx="4.2" cy="11.8" r="3.2" fill="#d8d8d8" stroke="#626262" stroke-width="1.1"/><circle cx="11.8" cy="4.2" r="3.2" fill="#d8d8d8" stroke="#626262" stroke-width="1.1"/><circle cx="4.2" cy="11.8" r="1.4" fill="#f4f4f4" stroke="#808080" stroke-width=".7"/><circle cx="11.8" cy="4.2" r="1.4" fill="#f4f4f4" stroke="#808080" stroke-width=".7"/></svg></div>
<div class="b" style="left:1529px;top:208px"><svg width="16" height="16" viewBox="0 0 16 16" style="display:block;"><path d="M2 5.5 H5.3 C4.2 3.2 5.2 1.6 6.8 1.6 C8.4 1.6 9.4 3.2 8.3 5.5 H11.5 V8.6 C13.6 7.6 15 8.5 15 10 C15 11.6 13.6 12.4 11.5 11.4 V14.5 H8.6 C9.4 12.6 8.4 11.6 6.9 11.6 C5.4 11.6 4.4 12.6 5.2 14.5 H2 Z" fill="#ffd24e" stroke="#e8a02c" stroke-width="1" stroke-linejoin="round"/><path d="M3 6.6 H10.5 M3 6.6 V13.4" stroke="#ffeaa6" stroke-width="1" fill="none"/></svg></div>
<div class="b" style="left:1551px;top:213px"><svg width="8" height="4" viewBox="0 0 8 4" style="display:block;"><path d="M0 0 H8 L4.0 4 Z" fill="#111"/></svg></div>
<div class="grp" style="left:623px;top:235px;width:236px"></div>
<div class="t" style="left:629px;top:245px;">Zoom</div>
<div class="t" style="left:666px;top:245px;">1:1</div>
<div class="b" style="left:699px;top:243px"><svg width="17" height="17" viewBox="0 0 17 17" style="display:block;"><g transform="translate(0.5,0.5) rotate(0 3.5 3.5)"><rect x="0" y="0" width="7" height="7" rx="1" fill="#9ad41a" stroke="#6fa800" stroke-width=".6"/><path d="M1.5 1.5 H4.6 L3.7 2.4 L5.6 4.3 L4.3 5.6 L2.4 3.7 L1.5 4.6 Z" fill="#f2ffd0"/></g><g transform="translate(9,0.5) rotate(90 3.5 3.5)"><rect x="0" y="0" width="7" height="7" rx="1" fill="#9ad41a" stroke="#6fa800" stroke-width=".6"/><path d="M1.5 1.5 H4.6 L3.7 2.4 L5.6 4.3 L4.3 5.6 L2.4 3.7 L1.5 4.6 Z" fill="#f2ffd0"/></g><g transform="translate(0.5,9) rotate(270 3.5 3.5)"><rect x="0" y="0" width="7" height="7" rx="1" fill="#9ad41a" stroke="#6fa800" stroke-width=".6"/><path d="M1.5 1.5 H4.6 L3.7 2.4 L5.6 4.3 L4.3 5.6 L2.4 3.7 L1.5 4.6 Z" fill="#f2ffd0"/></g><g transform="translate(9,9) rotate(180 3.5 3.5)"><rect x="0" y="0" width="7" height="7" rx="1" fill="#9ad41a" stroke="#6fa800" stroke-width=".6"/><path d="M1.5 1.5 H4.6 L3.7 2.4 L5.6 4.3 L4.3 5.6 L2.4 3.7 L1.5 4.6 Z" fill="#f2ffd0"/></g></svg></div>
<div class="t" style="left:719px;top:245px;">Fit</div>
<div class="cb" style="left:756px;top:240px;width:70px;height:22px"></div>
<div class="t" style="left:760px;top:245px;">77%</div>
<div class="b" style="left:813px;top:248px"><svg width="11" height="7" viewBox="0 0 11 7" style="display:block;"><path d="M1 1 L5.5 5.8 L10 1" fill="none" stroke="#111" stroke-width="1.6" stroke-linecap="butt" stroke-linejoin="miter"/></svg></div>
<div class="b" style="left:835px;top:243px"><svg width="11" height="16" viewBox="0 0 11 16" style="display:block;"><path d="M5.5 0.8 L10 5.5 L7.3 5.5 L7.3 10.5 L10 10.5 L5.5 15.2 L1 10.5 L3.7 10.5 L3.7 5.5 L1 5.5 Z" fill="#9ad41a" stroke="#6fa800" stroke-width=".9" stroke-linejoin="round"/><path d="M5 3 V13" stroke="#d8f58a" stroke-width="1"/></svg></div>
<div class="grp" style="left:862px;top:235px;width:226px"></div>
<div class="t" style="left:868px;top:245px;">Overlay</div>
<div class="cb" style="left:913px;top:240px;width:168px;height:22px"></div>
<div class="t" style="left:916px;top:245px;">None</div>
<div class="b" style="left:1067px;top:248px"><svg width="11" height="7" viewBox="0 0 11 7" style="display:block;"><path d="M1 1 L5.5 5.8 L10 1" fill="none" stroke="#111" stroke-width="1.6" stroke-linecap="butt" stroke-linejoin="miter"/></svg></div>
<div class="grp" style="left:1091px;top:235px;width:577px"></div>
<div class="t" style="left:1097px;top:245px;">Range</div>
<div class="cb" style="left:1131px;top:242px;width:108px;height:18px"></div>
<div class="t" style="left:1135px;top:245px;">0.00</div>
<div class="b" style="left:1246px;top:242px;width:192px;height:18px;border:1px solid #222;background:#7b8aa6"></div>
<div class="b" style="left:1242px;top:238px"><svg width="11" height="9" viewBox="0 0 11 9" style="display:block;"><path d="M0 0 H11 L5.5 9 Z" fill="#000"/></svg></div>
<div class="b" style="left:1431px;top:252px"><svg width="12" height="10" viewBox="0 0 12 10" style="display:block;"><path d="M0.7 9.5 L6 0.8 L11.3 9.5 Z" fill="#fff" stroke="#222" stroke-width=".9"/></svg></div>
<div class="cb" style="left:1445px;top:242px;width:108px;height:18px"></div>
<div class="t" style="left:1449px;top:245px;">1.00</div>
<div class="b" style="left:1560px;top:243px"><svg width="16" height="16" viewBox="0 0 16 16" style="display:block;"><path d="M10.6 10.6 L14.2 14.2" stroke="#e59a2a" stroke-width="2.6" stroke-linecap="round"/><circle cx="6.9" cy="6.9" r="5.2" fill="#cde6fa" stroke="#e8a83a" stroke-width="1.5"/><path d="M3.8 5.6 C4.6 3.8 6.6 3 8.4 3.6" fill="none" stroke="#fff" stroke-width="1"/></svg></div>
<div class="b" style="left:1587px;top:243px"><svg width="16" height="16" viewBox="0 0 16 16" style="display:block;"><path d="M1.5 14.5 L10.2 5.8" stroke="#555" stroke-width="2.4" stroke-linecap="round"/><path d="M2 14 L9.8 6.2" stroke="#bbb" stroke-width=".8" stroke-linecap="round"/><path d="M12 0.8 L12.9 3.2 L15.3 4 L12.9 4.9 L12 7.3 L11.1 4.9 L8.7 4 L11.1 3.2 Z" fill="#f8b02a" stroke="#e58f10" stroke-width=".5"/></svg></div>
<div class="b" style="left:1613px;top:243px"><svg width="17" height="16" viewBox="0 0 17 16" style="display:block;"><path d="M2.2 1.6 H10.6 C14.2 1.6 16.2 3.8 16.2 6.6 C16.2 9.6 14.2 11.8 10.6 11.8 H7.4 V15 L0.8 10.2 L7.4 5.4 V8.6 H10.4 C11.8 8.6 12.8 7.8 12.8 6.7 C12.8 5.6 11.8 4.8 10.4 4.8 H2.2 Z" fill="#8acb1c" stroke="#5a9606" stroke-width=".9" stroke-linejoin="round"/><path d="M3 2.8 H10.6 C13.2 2.8 14.8 4.4 15 6.2" fill="none" stroke="#c8ee78" stroke-width=".9"/></svg></div>
<div class="b" style="left:1641px;top:243px"><svg width="16" height="16" viewBox="0 0 16 16" style="display:block;"><rect x="0.5" y="0.5" width="15" height="15" fill="#fafafa" stroke="#b5b5b5" stroke-width="1"/><path d="M2 3 H14 M2 6 H14 M2 9 H14 M2 12 H14" stroke="#e2e2e2" stroke-width=".6"/><path d="M2 3 C6 3 8 12 14 13" fill="none" stroke="#e03a2a" stroke-width="1.3"/><path d="M2 13 C6 12 9 4 14 3" fill="none" stroke="#2a7ad8" stroke-width="1.3"/><path d="M2 8 C6 5 10 11 14 8" fill="none" stroke="#4aa82a" stroke-width="1.1"/></svg></div>
<div class="tab" style="left:623px;top:270px;width:247px;height:24px;background:#e3e3e3"></div>
<div class="b" style="left:627px;top:274px"><svg width="16" height="16" viewBox="0 0 16 16" style="display:block;"><rect width="16" height="16" fill="#3bb779"/><circle cx="7.9" cy="7.1" r="2.4" fill="none" stroke="#fff" stroke-width="1"/><path d="M2.4 10.9 Q4 9.7 5.8 9.5 Q7.9 8.9 10 9.5 Q11.8 9.7 13.6 10.9" fill="none" stroke="#fff" stroke-width=".9" stroke-linecap="round"/></svg></div>
<div class="t" style="left:646px;top:276px;">Cur Input 1 - 2D Depth Target 97492</div>
<div class="b" style="left:623px;top:293px;width:1609px;height:854px;border:1px solid #000;border-top:none;border-radius:0 0 2px 2px"></div>
<div class="b" style="left:869px;top:293px;width:1363px;height:1px;background:#000"></div>
<div class="b" style="left:623px;top:294px;width:1594px;height:823px;background:#000"></div>
<div class="b" style="left:1200px;top:620px"><svg width="320" height="460" viewBox="0 0 320 460" style="display:block;"><path d="M545,45 L552,95 L590,130 L612,170 L610,215 L595,250 L560,285 L535,300 L535,325 L560,350 L600,345 L625,365 L640,385 L680,430 L720,470 L750,495 L740,525 L700,555 L712,620 L710,700 L722,760 L718,800 L700,815 L720,845 L712,860 L685,858 L660,875 L690,950 L668,1000 L668,1075 L690,1080 L688,1100 L655,1105 L660,1160 L690,1185 L690,1215 L660,1255 L620,1260 L612,1200 L610,1130 L580,1060 L545,1000 L520,900 L508,960 L525,1060 L520,1120 L495,1175 L475,1210 L490,1290 L495,1335 L470,1342 L430,1320 L395,1295 L395,1260 L430,1245 L430,1195 L398,1190 L400,1165 L425,1160 L400,1120 L368,1070 L385,1030 L345,990 L378,900 L372,865 L340,860 L318,830 L325,760 L318,740 L322,640 L330,575 L275,525 L300,505 L360,420 L390,395 L392,375 L430,355 L460,355 L470,330 L480,300 L450,270 L415,250 L400,200 L410,150 L450,110 L462,85 L490,92 L510,70 Z M382,600 L410,570 L430,585 L400,680 L385,760 L372,790 L355,770 L370,700 Z M610,590 L640,570 L655,600 L668,680 L672,720 L655,750 L640,700 L625,650 Z" fill="#070707" fill-rule="evenodd" transform="scale(0.3289)"/></svg></div>
<div class="b" style="left:2219px;top:298px"><svg width="10" height="7" viewBox="0 0 10 7" style="display:block;"><path d="M1 6 L5.0 1.2 L9 6" fill="none" stroke="#666" stroke-width="2.6" stroke-linecap="butt" stroke-linejoin="miter"/></svg></div>
<div class="b" style="left:2219px;top:1105px"><svg width="10" height="7" viewBox="0 0 10 7" style="display:block;"><path d="M1 1 L5.0 5.8 L9 1" fill="none" stroke="#666" stroke-width="2.6" stroke-linecap="butt" stroke-linejoin="miter"/></svg></div>
<div class="b" style="left:2218px;top:542px;width:12px;height:111px;background:#646464;border-radius:5px"></div>
<div class="b" style="left:628px;top:1119px"><svg width="7" height="10" viewBox="0 0 7 10" style="display:block;"><path d="M6 1 L1.2 5.0 L6 9" fill="none" stroke="#666" stroke-width="2.6" stroke-linecap="butt" stroke-linejoin="miter"/></svg></div>
<div class="b" style="left:2206px;top:1119px"><svg width="7" height="10" viewBox="0 0 7 10" style="display:block;"><path d="M1 1 L5.8 5.0 L1 9" fill="none" stroke="#666" stroke-width="2.6" stroke-linecap="butt" stroke-linejoin="miter"/></svg></div>
<div class="b" style="left:1476px;top:1118px;width:220px;height:12px;background:#646464;border-radius:5px"></div>
<div class="m" style="left:624px;top:1133px;letter-spacing:0.035px">2D Depth Target 97492 - 2560x1440 1 mips - D32S8_TYPELESS Viewed as Depth/Stencil</div>
<div class="b" style="left:1200px;top:1131px;width:32px;height:14px;background:#000"></div>
<div class="m" style="left:1235px;top:1133px;letter-spacing:-0.032px">Hover -   355,  633 (0.1387, 0.4396)</div>
<div class="m" style="left:1501px;top:1133px;letter-spacing:0.037px">- Right click to pick a pixel</div>
<div class="b" style="left:623px;top:1152px;width:1609px;height:215px;border:1px solid #000;border-radius:2px;box-sizing:border-box"></div>
<div class="b" style="left:624px;top:1153px;width:1607px;height:15px;background:#bdbdbd;border-bottom:1px solid #666"></div>
<div class="t" style="left:628px;top:1153px;">Inputs</div>
<div class="th" style="left:630px;top:1174px;width:241px;height:186px"></div>
<div class="b" style="left:634px;top:1193px;width:233px;height:133px;background:linear-gradient(#020202,#060606)"></div>
<div class="b" style="left:740px;top:1246px"><svg width="20" height="50" viewBox="0 0 20 50" style="display:block;"><g fill="#040404"><path d="M10,0 l4,4 l-1,7 l-5,0 l-2,-6 z"/><path d="M5,12 l10,0 l4,10 l-3,3 l1,12 l-2,12 l-3,0 l-1,-14 l-2,0 l-1,14 l-3,0 l-1,-12 l0,-12 l-3,-3 z"/></g></svg></div>
<div class="lb" style="left:634px;top:1342px;width:233px"><span class="t" style="left:1px;color:#000">PS 0</span><span class="t" style="right:0;color:#000">:eneTexturesStruct_SceneDepthTextur</span></div>
<div class="th" style="left:877px;top:1174px;width:241px;height:186px"></div>
<div class="b" style="left:877px;top:1174px;width:241px;height:186px;border:3px solid #ff0000;border-radius:4px"></div>
<div class="b" style="left:987px;top:1246px"><svg width="20" height="50" viewBox="0 0 20 50" style="display:block;"><g fill="#080808"><path d="M10,0 l4,4 l-1,7 l-5,0 l-2,-6 z"/><path d="M5,12 l10,0 l4,10 l-3,3 l1,12 l-2,12 l-3,0 l-1,-14 l-2,0 l-1,14 l-3,0 l-1,-12 l0,-12 l-3,-3 z"/></g></svg></div>
<div class="lb" style="left:881px;top:1342px;width:233px"><span class="t" style="left:1px;color:#000">PS 1</span><span class="t" style="right:0;color:#000"> eneTexturesStruct_CustomDepthTextu</span></div>
<div class="th" style="left:1124px;top:1174px;width:241px;height:186px"></div>
<div class="b" style="left:1234px;top:1246px"><svg width="20" height="50" viewBox="0 0 20 50" style="display:block;"><g fill="#080808"><path d="M10,0 l4,4 l-1,7 l-5,0 l-2,-6 z"/><path d="M5,12 l10,0 l4,10 l-3,3 l1,12 l-2,12 l-3,0 l-1,-14 l-2,0 l-1,14 l-3,0 l-1,-12 l0,-12 l-3,-3 z"/></g></svg></div>
<div class="lb" style="left:1128px;top:1342px;width:233px"><span class="t" style="left:1px;color:#000">PS 2</span><span class="t" style="right:0;color:#000">neTexturesStruct_CustomStencilTextu</span></div>
<div class="th" style="left:1371px;top:1174px;width:241px;height:186px"></div>
<div class="b" style="left:1375px;top:1194px"><svg width="233" height="132" viewBox="0 0 297 168" preserveAspectRatio="none" style="display:block">
<defs>
<linearGradient id="gw2" x1="0" y1="0" x2="1" y2="0"><stop offset="0" stop-color="#2a2a2c"/><stop offset=".3" stop-color="#3c3c3e"/><stop offset=".6" stop-color="#434345"/><stop offset="1" stop-color="#3a3a3c"/></linearGradient>
<linearGradient id="gf2" x1="0" y1="0" x2="1" y2="0"><stop offset="0" stop-color="#858585"/><stop offset=".12" stop-color="#6c6c6c"/><stop offset=".4" stop-color="#5a5a5a"/><stop offset=".7" stop-color="#4a4a4a"/><stop offset="1" stop-color="#444"/></linearGradient>
<linearGradient id="gfd2" x1="0" y1="0" x2="0" y2="1"><stop offset="0" stop-color="#000" stop-opacity="0"/><stop offset=".4" stop-color="#000" stop-opacity=".12"/><stop offset="1" stop-color="#000" stop-opacity=".5"/></linearGradient>
<linearGradient id="go2" x1="0" y1="0" x2="1" y2="0"><stop offset="0" stop-color="#ffd870"/><stop offset=".25" stop-color="#e8861e"/><stop offset=".6" stop-color="#a8481a"/><stop offset="1" stop-color="#2a140c"/></linearGradient>
<linearGradient id="gp2" x1="0" y1="0" x2="1" y2="1"><stop offset="0" stop-color="#e0e0e0"/><stop offset=".5" stop-color="#bcbcbc"/><stop offset="1" stop-color="#6a6a6a"/></linearGradient>
<linearGradient id="gv2" x1="0" y1="0" x2="0" y2="1"><stop offset="0" stop-color="#a040ff"/><stop offset=".5" stop-color="#4080ff"/><stop offset="1" stop-color="#20e0e0"/></linearGradient>
<radialGradient id="gl2" cx=".5" cy=".5" r=".5"><stop offset="0" stop-color="#fff"/><stop offset=".3" stop-color="#f0f0f0" stop-opacity=".9"/><stop offset="1" stop-color="#909090" stop-opacity="0"/></radialGradient>
<pattern id="rg2" width="2.4" height="2.4" patternUnits="userSpaceOnUse" patternTransform="rotate(18)"><rect width="2.4" height="2.4" fill="#1c1c1c"/><circle cx="1.2" cy="1.2" r=".55" fill="#3c3c3c"/></pattern>
</defs>
<rect width="297" height="168" fill="url(#gw2)"/>
<polygon points="0,0 36,0 44,62 0,70" fill="#2b2b2d"/>
<polygon points="36,0 125,8 110,60 44,62" fill="#39393b"/>
<polygon points="0,69 44,61 110,59 186,63 297,80 297,168 0,168" fill="url(#gf2)"/>
<polygon points="0,69 44,61 110,59 186,63 297,80 297,168 0,168" fill="url(#gfd2)"/>
<ellipse cx="0" cy="92" rx="20" ry="27" fill="url(#gl2)"/>
<path d="M72,63 L166,168 M95,62 L130,100" stroke="#2e2e2e" stroke-width="1.2" fill="none"/>
<path d="M110,96 L150,90 M200,110 L297,130 M240,168 L297,135" stroke="#3a3a3a" stroke-width=".8" fill="none"/>
<g stroke="#fff0a8" stroke-width="1.2"><path d="M39.3,17.3 L45,45"/><path d="M62.6,18.4 L62.6,44.4"/><path d="M84,19.2 L77.7,44.4"/><path d="M103.5,20.5 L92.8,44.4"/><path d="M119.8,21.7 L106,44.4"/></g>
<polygon points="42.5,46.3 108,45.6 108,49.4 44.4,51.3" fill="#9a9a9a"/>
<polygon points="44.4,51.3 107.9,49.4 107.9,58.8 45,63.2" fill="url(#go2)"/>
<path d="M153.7,0 V60" stroke="#242426" stroke-width=".8"/><g stroke="#d8904a" stroke-opacity=".16" stroke-width="2.2"><path d="M66,66 L71,92"/><path d="M82,65 L89,90"/><path d="M97,64 L105,86"/><path d="M56,80 L58,100"/></g><polygon points="48,64 71,63 78,78 49,79" fill="url(#rg2)"/>
<polygon points="48,101.5 93.4,95.3 124.2,133 48,157" fill="url(#rg2)"/>
<polygon points="172,82.7 192,79.6 252.4,96.5 232.3,104" fill="url(#rg2)"/>
<polygon points="185.8,29.3 286.4,22.4 285,66.4 207,57.6 187,51.3" fill="#161616"/>
<polygon points="190.8,31.8 285,25.5 276.3,63.9 209.7,56.3 190.8,48.8" fill="url(#gp2)"/>
<path d="M187,50 L186.4,29.6 L286,22.8" fill="none" stroke="#ffe070" stroke-width="1.2" stroke-dasharray="9 3"/>
<path d="M209,58 L276,66" fill="none" stroke="#ffe070" stroke-width="1" stroke-dasharray="6 5"/>
<rect x="217.8" y="46.3" width="21.4" height="10.7" fill="#1a9ee8"/><rect x="240.5" y="46.3" width="15.1" height="10.7" fill="#1aa6ee"/>
<path d="M226,48 l4,6 M246,48 l3,6" stroke="#fff" stroke-width="2"/><path d="M229,52 l2,4 M249,52 l2,4" stroke="#e02020" stroke-width="1.2"/>
<rect x="256" y="47" width="18" height="11" fill="#6a7078"/>
<polygon points="199,0 216,0 215,19 199,19.5" fill="#ffc810"/><path d="M203,3 l6,3 l-4,8 l6,2" stroke="#fff" stroke-width="3" fill="none"/><circle cx="202" cy="16" r="1.2" fill="#e02020"/>
<polygon points="237,0 263,0 262,13 236,15.5" fill="#30b0f0"/><path d="M241,3 l8,2 l-6,6 M252,2 l6,3 l-5,6" stroke="#fff" stroke-width="2" fill="none"/><path d="M256,4 l-3,7" stroke="#e02020" stroke-width="1"/>
<polygon points="291,8 297,5 297,40 288.9,39" fill="url(#gv2)"/>
<polygon points="285,47 297,46 297,67 283.2,64" fill="#30e0f0"/><path d="M288,52 l5,3 l-4,6" stroke="#fff" stroke-width="2" fill="none"/>
<rect x="182" y="49.4" width="23.3" height="13.2" fill="#4c4c4c"/>
<path d="M172.6,66 Q194,74 214.7,66.6" fill="none" stroke="#ffb040" stroke-width="2"/>
<path d="M172.6,65.4 Q194,73 214.7,66" fill="none" stroke="#fff0a0" stroke-width=".8"/>
<path d="M255,79.6 l13,3.2 l2,-5" stroke="#ffb848" stroke-width="1.6" fill="none"/>
<polygon points="228.5,158 261.2,140.5 278.8,148.7 246,168 240,168" fill="#4a2c12"/>
<polygon points="236,162 261.2,148 269.4,152.5 244.2,168" fill="#fff4b0"/>
<g fill="#0e0e0e"><path d="M147.6,66.5 l2.4,3.5 l2.6,2.5 l-.6,4 l-2.6,3.4 l-5,0 l-2.4,-4.4 l1,-4.4 l3,-2.4 z"/><path d="M142,80.5 l9.5,-.5 l7,6.5 l-2,9 l1.4,9.5 l-2.8,1.5 l1.2,9 l-2.5,14 l-3.6,.6 l-.8,-13 l-2.2,-8 l-1.6,9 l0,12.6 l-3.8,1.2 l-1.6,-13 l.8,-14 l-1.2,-9 l-2.6,1 l-1.2,-10 l2.4,-8 z"/></g>
<path d="M156,101.5 l8,-1.2" stroke="#ffd888" stroke-width="1.2"/>
</svg></div>
<div class="lb" style="left:1375px;top:1342px;width:233px"><span class="t" style="left:1px;color:#000">PS 3</span><span class="t" style="left:51px;color:#000">PostProcessInput_0_Texture</span></div>
<div class="b" style="left:2237px;top:270px;width:319px;height:959px;border:1px solid #000;border-radius:2px;box-sizing:border-box"></div>
<div class="b" style="left:2238px;top:271px;width:317px;height:15px;background:#bdbdbd;border-bottom:1px solid #666"></div>
<div class="t" style="left:2242px;top:271px;">Outputs</div>
<div class="th" style="left:2244px;top:292px;width:305px;height:234px"></div>
<div class="b" style="left:2248px;top:318px"><svg width="297" height="168" viewBox="0 0 297 168" preserveAspectRatio="none" style="display:block">
<defs>
<linearGradient id="gw" x1="0" y1="0" x2="1" y2="0"><stop offset="0" stop-color="#2a2a2c"/><stop offset=".3" stop-color="#3c3c3e"/><stop offset=".6" stop-color="#434345"/><stop offset="1" stop-color="#3a3a3c"/></linearGradient>
<linearGradient id="gf" x1="0" y1="0" x2="1" y2="0"><stop offset="0" stop-color="#858585"/><stop offset=".12" stop-color="#6c6c6c"/><stop offset=".4" stop-color="#5a5a5a"/><stop offset=".7" stop-color="#4a4a4a"/><stop offset="1" stop-color="#444"/></linearGradient>
<linearGradient id="gfd" x1="0" y1="0" x2="0" y2="1"><stop offset="0" stop-color="#000" stop-opacity="0"/><stop offset=".4" stop-color="#000" stop-opacity=".12"/><stop offset="1" stop-color="#000" stop-opacity=".5"/></linearGradient>
<linearGradient id="go" x1="0" y1="0" x2="1" y2="0"><stop offset="0" stop-color="#ffd870"/><stop offset=".25" stop-color="#e8861e"/><stop offset=".6" stop-color="#a8481a"/><stop offset="1" stop-color="#2a140c"/></linearGradient>
<linearGradient id="gp" x1="0" y1="0" x2="1" y2="1"><stop offset="0" stop-color="#e0e0e0"/><stop offset=".5" stop-color="#bcbcbc"/><stop offset="1" stop-color="#6a6a6a"/></linearGradient>
<linearGradient id="gv" x1="0" y1="0" x2="0" y2="1"><stop offset="0" stop-color="#a040ff"/><stop offset=".5" stop-color="#4080ff"/><stop offset="1" stop-color="#20e0e0"/></linearGradient>
<radialGradient id="gl" cx=".5" cy=".5" r=".5"><stop offset="0" stop-color="#fff"/><stop offset=".3" stop-color="#f0f0f0" stop-opacity=".9"/><stop offset="1" stop-color="#909090" stop-opacity="0"/></radialGradient>
<pattern id="rg" width="2.4" height="2.4" patternUnits="userSpaceOnUse" patternTransform="rotate(18)"><rect width="2.4" height="2.4" fill="#1c1c1c"/><circle cx="1.2" cy="1.2" r=".55" fill="#3c3c3c"/></pattern>
</defs>
<rect width="297" height="168" fill="url(#gw)"/>
<polygon points="0,0 36,0 44,62 0,70" fill="#2b2b2d"/>
<polygon points="36,0 125,8 110,60 44,62" fill="#39393b"/>
<polygon points="0,69 44,61 110,59 186,63 297,80 297,168 0,168" fill="url(#gf)"/>
<polygon points="0,69 44,61 110,59 186,63 297,80 297,168 0,168" fill="url(#gfd)"/>
<ellipse cx="0" cy="92" rx="20" ry="27" fill="url(#gl)"/>
<path d="M72,63 L166,168 M95,62 L130,100" stroke="#2e2e2e" stroke-width="1.2" fill="none"/>
<path d="M110,96 L150,90 M200,110 L297,130 M240,168 L297,135" stroke="#3a3a3a" stroke-width=".8" fill="none"/>
<g stroke="#fff0a8" stroke-width="1.2"><path d="M39.3,17.3 L45,45"/><path d="M62.6,18.4 L62.6,44.4"/><path d="M84,19.2 L77.7,44.4"/><path d="M103.5,20.5 L92.8,44.4"/><path d="M119.8,21.7 L106,44.4"/></g>
<polygon points="42.5,46.3 108,45.6 108,49.4 44.4,51.3" fill="#9a9a9a"/>
<polygon points="44.4,51.3 107.9,49.4 107.9,58.8 45,63.2" fill="url(#go)"/>
<path d="M153.7,0 V60" stroke="#242426" stroke-width=".8"/><g stroke="#d8904a" stroke-opacity=".16" stroke-width="2.2"><path d="M66,66 L71,92"/><path d="M82,65 L89,90"/><path d="M97,64 L105,86"/><path d="M56,80 L58,100"/></g><polygon points="48,64 71,63 78,78 49,79" fill="url(#rg)"/>
<polygon points="48,101.5 93.4,95.3 124.2,133 48,157" fill="url(#rg)"/>
<polygon points="172,82.7 192,79.6 252.4,96.5 232.3,104" fill="url(#rg)"/>
<polygon points="185.8,29.3 286.4,22.4 285,66.4 207,57.6 187,51.3" fill="#161616"/>
<polygon points="190.8,31.8 285,25.5 276.3,63.9 209.7,56.3 190.8,48.8" fill="url(#gp)"/>
<path d="M187,50 L186.4,29.6 L286,22.8" fill="none" stroke="#ffe070" stroke-width="1.2" stroke-dasharray="9 3"/>
<path d="M209,58 L276,66" fill="none" stroke="#ffe070" stroke-width="1" stroke-dasharray="6 5"/>
<rect x="217.8" y="46.3" width="21.4" height="10.7" fill="#1a9ee8"/><rect x="240.5" y="46.3" width="15.1" height="10.7" fill="#1aa6ee"/>
<path d="M226,48 l4,6 M246,48 l3,6" stroke="#fff" stroke-width="2"/><path d="M229,52 l2,4 M249,52 l2,4" stroke="#e02020" stroke-width="1.2"/>
<rect x="256" y="47" width="18" height="11" fill="#6a7078"/>
<polygon points="199,0 216,0 215,19 199,19.5" fill="#ffc810"/><path d="M203,3 l6,3 l-4,8 l6,2" stroke="#fff" stroke-width="3" fill="none"/><circle cx="202" cy="16" r="1.2" fill="#e02020"/>
<polygon points="237,0 263,0 262,13 236,15.5" fill="#30b0f0"/><path d="M241,3 l8,2 l-6,6 M252,2 l6,3 l-5,6" stroke="#fff" stroke-width="2" fill="none"/><path d="M256,4 l-3,7" stroke="#e02020" stroke-width="1"/>
<polygon points="291,8 297,5 297,40 288.9,39" fill="url(#gv)"/>
<polygon points="285,47 297,46 297,67 283.2,64" fill="#30e0f0"/><path d="M288,52 l5,3 l-4,6" stroke="#fff" stroke-width="2" fill="none"/>
<rect x="182" y="49.4" width="23.3" height="13.2" fill="#4c4c4c"/>
<path d="M172.6,66 Q194,74 214.7,66.6" fill="none" stroke="#ffb040" stroke-width="2"/>
<path d="M172.6,65.4 Q194,73 214.7,66" fill="none" stroke="#fff0a0" stroke-width=".8"/>
<path d="M255,79.6 l13,3.2 l2,-5" stroke="#ffb848" stroke-width="1.6" fill="none"/>
<polygon points="228.5,158 261.2,140.5 278.8,148.7 246,168 240,168" fill="#4a2c12"/>
<polygon points="236,162 261.2,148 269.4,152.5 244.2,168" fill="#fff4b0"/>
<g fill="#0e0e0e"><path d="M147.6,66.5 l2.4,3.5 l2.6,2.5 l-.6,4 l-2.6,3.4 l-5,0 l-2.4,-4.4 l1,-4.4 l3,-2.4 z"/><path d="M142,80.5 l9.5,-.5 l7,6.5 l-2,9 l1.4,9.5 l-2.8,1.5 l1.2,9 l-2.5,14 l-3.6,.6 l-.8,-13 l-2.2,-8 l-1.6,9 l0,12.6 l-3.8,1.2 l-1.6,-13 l.8,-14 l-1.2,-9 l-2.6,1 l-1.2,-10 l2.4,-8 z"/></g>
<path d="M156,101.5 l8,-1.2" stroke="#ffd888" stroke-width="1.2"/>
</svg></div>
<div class="lb" style="left:2248px;top:508px;width:297px"><span class="t" style="left:1px">RT0</span><span class="t" style="left:91px">2D Render Target 97599</span></div>
<div class="b" style="left:2237px;top:1234px;width:319px;height:133px;border:1px solid #000;border-radius:2px;box-sizing:border-box"></div>
<div class="b" style="left:2238px;top:1235px;width:317px;height:15px;background:#bdbdbd;border-bottom:1px solid #666"></div>
<div class="t" style="left:2242px;top:1235px;">Pixel Context</div>
<div class="b" style="left:2238px;top:1250px;width:317px;height:92px;background:#e4e4e4;overflow:hidden"><div class="b" style="left:0px;top:0px;width:64px;height:64px;background:#999"></div><div class="b" style="left:128px;top:0px;width:64px;height:64px;background:#999"></div><div class="b" style="left:256px;top:0px;width:64px;height:64px;background:#999"></div><div class="b" style="left:64px;top:64px;width:64px;height:64px;background:#999"></div><div class="b" style="left:192px;top:64px;width:64px;height:64px;background:#999"></div></div>
<div class="b" style="left:2282px;top:1342px;width:69px;height:23px;border:1px solid #000;border-radius:2px;background:#e3e3e3;box-shadow:1px 1px 0 #555"></div>
<div class="b" style="left:2286px;top:1346px"><svg width="16" height="16" viewBox="0 0 16 16" style="display:block;"><circle cx="9.5" cy="8.5" r="5.8" fill="#f4f4f4" stroke="#aaa" stroke-width="1.4"/><path d="M9.5 5 V8.5 H12" stroke="#666" stroke-width="1" fill="none"/><path d="M8.5 1.6 C4 1.4 1.8 4.6 2.2 8 L0.2 8 L3.6 12 L6.6 8 L4.6 8 C4.4 5.6 6 3.8 8.5 4 Z" fill="#7fc41a" stroke="#5a9a00" stroke-width=".6"/></svg></div>
<div class="t" style="left:2303px;top:1348px;">History</div>
<div class="b" style="left:2447px;top:1342px;width:57px;height:23px;border:1px solid #000;border-radius:2px;background:#e3e3e3;box-shadow:1px 1px 0 #555"></div>
<div class="b" style="left:2451px;top:1345px"><svg width="16" height="16" viewBox="0 0 16 16" style="display:block;"><path d="M2.2 14.8 C1 13.6 1.2 12.8 2 12 L8.4 5.8 L10.4 7.8 L4.2 14.2 C3.4 15 2.8 15.2 2.2 14.8 Z" fill="#3a9be8" stroke="#1d6fc0" stroke-width=".8"/><path d="M8.2 6.2 C7 3.4 9 0.6 12.4 1 L10.4 3.2 L11 5.2 L13 5.8 L15 3.8 C15.4 7 12.6 9 10 7.8 Z" fill="#d8d8d8" stroke="#8a8a8a" stroke-width=".8" stroke-linejoin="round"/></svg></div>
<div class="t" style="left:2468px;top:1348px;">Debug</div>
</body></html>
